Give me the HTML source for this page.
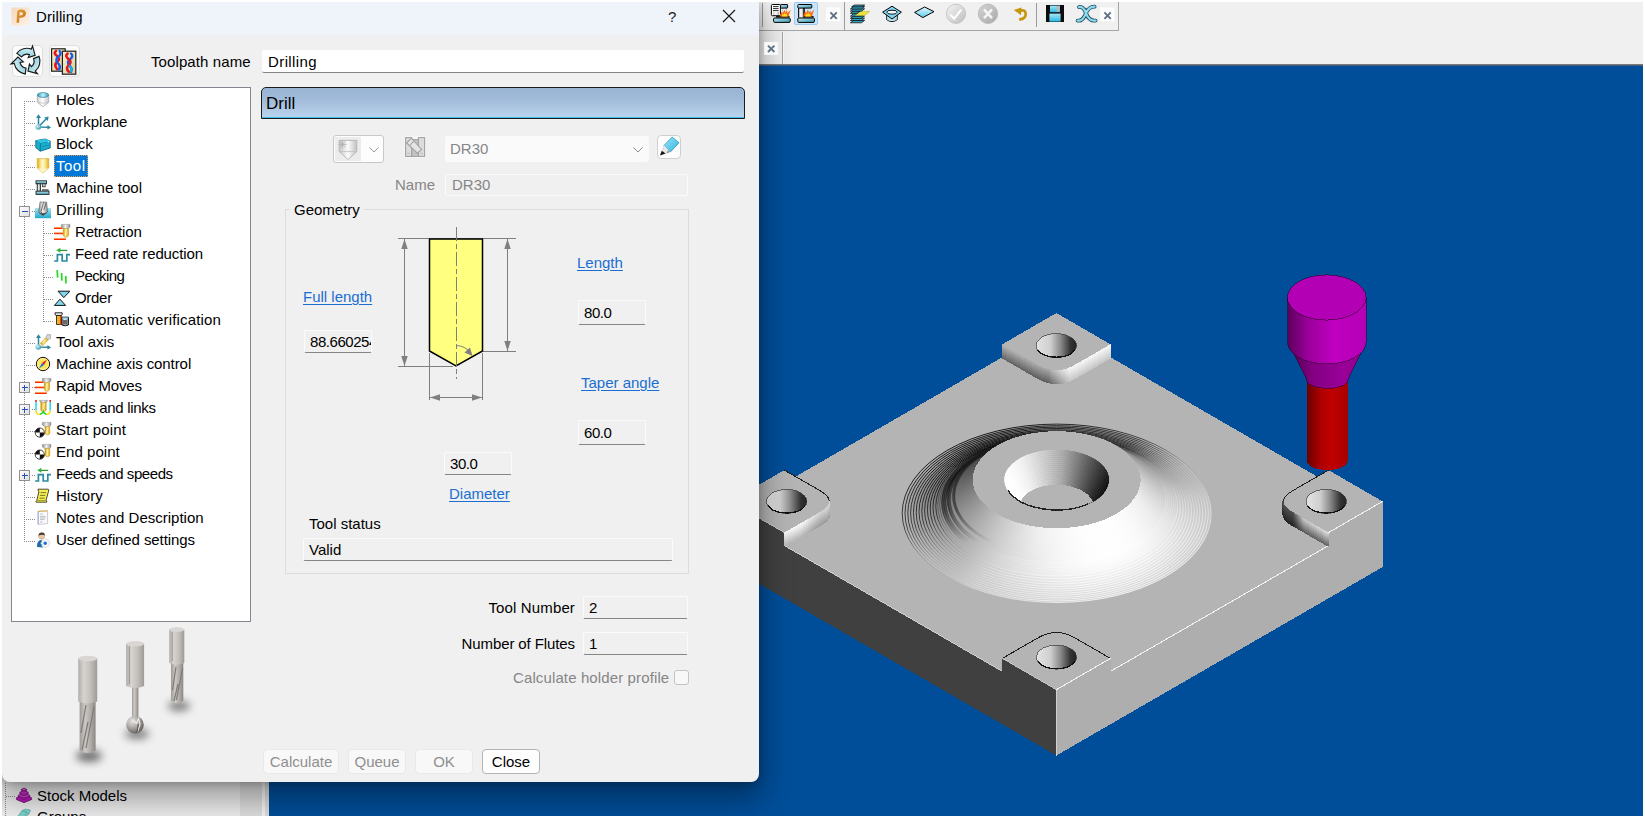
<!DOCTYPE html>
<html lang="en">
<head>
<meta charset="utf-8">
<title>Drilling</title>
<style>
html,body{margin:0;padding:0;}
body{width:1645px;height:818px;overflow:hidden;background:#fff;position:relative;font-family:"Liberation Sans",sans-serif;font-size:15px;color:#000;}
.abs{position:absolute;}
#app{position:absolute;left:2px;top:2px;width:1641px;height:814px;overflow:hidden;background:#004e99;}
#pg{position:absolute;left:-2px;top:-2px;width:1645px;height:818px;}
.t{position:absolute;white-space:nowrap;line-height:22px;height:22px;}
.r{text-align:right;}
.lnk{color:#1a6ed2;text-decoration:underline;text-underline-offset:2px;}
.dis{color:#868686;}
.fld{position:absolute;box-sizing:border-box;height:23px;line-height:21px;background:#f0f0f0;border:1px solid #fbfbfb;border-bottom:1px solid #868686;border-radius:2px;padding-left:5px;white-space:nowrap;overflow:hidden;letter-spacing:-0.45px;}
.btn{position:absolute;box-sizing:border-box;height:25px;line-height:24px;text-align:center;border-radius:4px;border:1px solid #e9e9e9;background:#f8f8f8;color:#8f8f8f;}
.ico{position:absolute;overflow:visible;}
.dot-h{position:absolute;height:1px;background-image:linear-gradient(90deg,#8a8a8a 50%,transparent 50%);background-size:2px 1px;}
.dot-v{position:absolute;width:1px;background-image:linear-gradient(180deg,#8a8a8a 50%,transparent 50%);background-size:1px 2px;}
.xbtn{position:absolute;width:14px;height:13px;background:#fdfdfd;}
</style>
</head>
<body>
<div id="app"><div id="pg">
<!-- ===== main window toolbars (right/top) ===== -->
<div class="abs" style="left:759px;top:2px;width:884px;height:62px;background:#f0f0f0;"></div>
<div class="abs" style="left:759px;top:30px;width:360px;height:1px;background:#a6a6a6;"></div>
<div class="abs" style="left:1118px;top:2px;width:1px;height:29px;background:#a6a6a6;"></div>
<div class="abs" style="left:762px;top:3px;width:1px;height:24px;background:#9a9a9a;"></div>
<div class="abs" style="left:844px;top:2px;width:1px;height:28px;background:#9a9a9a;"></div>
<div class="abs" style="left:1036px;top:3px;width:1px;height:24px;background:#9a9a9a;"></div>
<div class="abs" style="left:782px;top:32px;width:1px;height:32px;background:#a6a6a6;"></div>
<div class="abs" style="left:794px;top:2px;width:24px;height:23px;box-sizing:border-box;background:#cce4f7;border:1px solid #99c9ef;border-radius:2px;"></div>
<div class="abs" style="left:759px;top:64px;width:884px;height:1px;background:#7a7a7a;"></div>
<div class="abs" style="left:759px;top:65px;width:884px;height:1px;background:#4a5f7c;"></div>
<div class="abs" style="left:783px;top:32px;width:1px;height:32px;background:#fafafa;"></div>
<svg class="abs" style="left:0;top:0" width="1645" height="818" viewBox="0 0 1645 818" shape-rendering="crispEdges">
<defs>
<linearGradient id="hole" x1="0" y1="0" x2="1" y2="0"><stop offset="0" stop-color="#e4e4e4"/><stop offset="0.35" stop-color="#cfcfcf"/><stop offset="0.6" stop-color="#8a8a8a"/><stop offset="0.85" stop-color="#333"/><stop offset="1" stop-color="#222"/></linearGradient>
<linearGradient id="bw00_13" gradientUnits="userSpaceOnUse" x1="1002.3" y1="0" x2="1110.5" y2="0"><stop offset="0" stop-color="#666666"/><stop offset="0.42" stop-color="#5e5e5e"/><stop offset="0.62" stop-color="#c7c7c7"/><stop offset="1" stop-color="#c7c7c7"/></linearGradient>
<linearGradient id="bw00_12" gradientUnits="userSpaceOnUse" x1="1002.3" y1="0" x2="1110.5" y2="0"><stop offset="0" stop-color="#6c6c6c"/><stop offset="0.42" stop-color="#636363"/><stop offset="0.62" stop-color="#cacaca"/><stop offset="1" stop-color="#cacaca"/></linearGradient>
<linearGradient id="bw00_11" gradientUnits="userSpaceOnUse" x1="1002.3" y1="0" x2="1110.5" y2="0"><stop offset="0" stop-color="#727272"/><stop offset="0.42" stop-color="#696969"/><stop offset="0.62" stop-color="#cecece"/><stop offset="1" stop-color="#cecece"/></linearGradient>
<linearGradient id="bw00_10" gradientUnits="userSpaceOnUse" x1="1002.3" y1="0" x2="1110.5" y2="0"><stop offset="0" stop-color="#787878"/><stop offset="0.42" stop-color="#6e6e6e"/><stop offset="0.62" stop-color="#d1d1d1"/><stop offset="1" stop-color="#d1d1d1"/></linearGradient>
<linearGradient id="bw00_9" gradientUnits="userSpaceOnUse" x1="1002.3" y1="0" x2="1110.5" y2="0"><stop offset="0" stop-color="#7e7e7e"/><stop offset="0.42" stop-color="#737373"/><stop offset="0.62" stop-color="#d5d5d5"/><stop offset="1" stop-color="#d5d5d5"/></linearGradient>
<linearGradient id="bw00_8" gradientUnits="userSpaceOnUse" x1="1002.3" y1="0" x2="1110.5" y2="0"><stop offset="0" stop-color="#838383"/><stop offset="0.42" stop-color="#797979"/><stop offset="0.62" stop-color="#d9d9d9"/><stop offset="1" stop-color="#d9d9d9"/></linearGradient>
<linearGradient id="bw00_7" gradientUnits="userSpaceOnUse" x1="1002.3" y1="0" x2="1110.5" y2="0"><stop offset="0" stop-color="#898989"/><stop offset="0.42" stop-color="#7e7e7e"/><stop offset="0.62" stop-color="#dcdcdc"/><stop offset="1" stop-color="#dcdcdc"/></linearGradient>
<linearGradient id="bw00_6" gradientUnits="userSpaceOnUse" x1="1002.3" y1="0" x2="1110.5" y2="0"><stop offset="0" stop-color="#8f8f8f"/><stop offset="0.42" stop-color="#848484"/><stop offset="0.62" stop-color="#e0e0e0"/><stop offset="1" stop-color="#e0e0e0"/></linearGradient>
<linearGradient id="bw00_5" gradientUnits="userSpaceOnUse" x1="1002.3" y1="0" x2="1110.5" y2="0"><stop offset="0" stop-color="#959595"/><stop offset="0.42" stop-color="#898989"/><stop offset="0.62" stop-color="#e3e3e3"/><stop offset="1" stop-color="#e3e3e3"/></linearGradient>
<linearGradient id="bw00_4" gradientUnits="userSpaceOnUse" x1="1002.3" y1="0" x2="1110.5" y2="0"><stop offset="0" stop-color="#9b9b9b"/><stop offset="0.42" stop-color="#8f8f8f"/><stop offset="0.62" stop-color="#e7e7e7"/><stop offset="1" stop-color="#e7e7e7"/></linearGradient>
<linearGradient id="bw00_3" gradientUnits="userSpaceOnUse" x1="1002.3" y1="0" x2="1110.5" y2="0"><stop offset="0" stop-color="#a1a1a1"/><stop offset="0.42" stop-color="#949494"/><stop offset="0.62" stop-color="#eaeaea"/><stop offset="1" stop-color="#eaeaea"/></linearGradient>
<linearGradient id="bw00_2" gradientUnits="userSpaceOnUse" x1="1002.3" y1="0" x2="1110.5" y2="0"><stop offset="0" stop-color="#a7a7a7"/><stop offset="0.42" stop-color="#999999"/><stop offset="0.62" stop-color="#eeeeee"/><stop offset="1" stop-color="#eeeeee"/></linearGradient>
<linearGradient id="bw00_1" gradientUnits="userSpaceOnUse" x1="1002.3" y1="0" x2="1110.5" y2="0"><stop offset="0" stop-color="#adadad"/><stop offset="0.42" stop-color="#9f9f9f"/><stop offset="0.62" stop-color="#f1f1f1"/><stop offset="1" stop-color="#f1f1f1"/></linearGradient>
<linearGradient id="bw00_0" gradientUnits="userSpaceOnUse" x1="1002.3" y1="0" x2="1110.5" y2="0"><stop offset="0" stop-color="#b2b2b2"/><stop offset="0.42" stop-color="#a4a4a4"/><stop offset="0.62" stop-color="#f5f5f5"/><stop offset="1" stop-color="#f5f5f5"/></linearGradient>
<linearGradient id="bw08_13" gradientUnits="userSpaceOnUse" x1="784.3" y1="0" x2="820.1" y2="0"><stop offset="0" stop-color="#b8b8b8"/><stop offset="0.5" stop-color="#b8b8b8"/><stop offset="1" stop-color="#9c9c9c"/></linearGradient>
<linearGradient id="bw08_12" gradientUnits="userSpaceOnUse" x1="784.3" y1="0" x2="820.1" y2="0"><stop offset="0" stop-color="#bdbdbd"/><stop offset="0.5" stop-color="#bdbdbd"/><stop offset="1" stop-color="#a0a0a0"/></linearGradient>
<linearGradient id="bw08_11" gradientUnits="userSpaceOnUse" x1="784.3" y1="0" x2="820.1" y2="0"><stop offset="0" stop-color="#c1c1c1"/><stop offset="0.5" stop-color="#c1c1c1"/><stop offset="1" stop-color="#a4a4a4"/></linearGradient>
<linearGradient id="bw08_10" gradientUnits="userSpaceOnUse" x1="784.3" y1="0" x2="820.1" y2="0"><stop offset="0" stop-color="#c6c6c6"/><stop offset="0.5" stop-color="#c6c6c6"/><stop offset="1" stop-color="#a9a9a9"/></linearGradient>
<linearGradient id="bw08_9" gradientUnits="userSpaceOnUse" x1="784.3" y1="0" x2="820.1" y2="0"><stop offset="0" stop-color="#cbcbcb"/><stop offset="0.5" stop-color="#cbcbcb"/><stop offset="1" stop-color="#adadad"/></linearGradient>
<linearGradient id="bw08_8" gradientUnits="userSpaceOnUse" x1="784.3" y1="0" x2="820.1" y2="0"><stop offset="0" stop-color="#d0d0d0"/><stop offset="0.5" stop-color="#d0d0d0"/><stop offset="1" stop-color="#b1b1b1"/></linearGradient>
<linearGradient id="bw08_7" gradientUnits="userSpaceOnUse" x1="784.3" y1="0" x2="820.1" y2="0"><stop offset="0" stop-color="#d5d5d5"/><stop offset="0.5" stop-color="#d5d5d5"/><stop offset="1" stop-color="#b5b5b5"/></linearGradient>
<linearGradient id="bw08_6" gradientUnits="userSpaceOnUse" x1="784.3" y1="0" x2="820.1" y2="0"><stop offset="0" stop-color="#dadada"/><stop offset="0.5" stop-color="#dadada"/><stop offset="1" stop-color="#b9b9b9"/></linearGradient>
<linearGradient id="bw08_5" gradientUnits="userSpaceOnUse" x1="784.3" y1="0" x2="820.1" y2="0"><stop offset="0" stop-color="#dfdfdf"/><stop offset="0.5" stop-color="#dfdfdf"/><stop offset="1" stop-color="#bdbdbd"/></linearGradient>
<linearGradient id="bw08_4" gradientUnits="userSpaceOnUse" x1="784.3" y1="0" x2="820.1" y2="0"><stop offset="0" stop-color="#e4e4e4"/><stop offset="0.5" stop-color="#e4e4e4"/><stop offset="1" stop-color="#c2c2c2"/></linearGradient>
<linearGradient id="bw08_3" gradientUnits="userSpaceOnUse" x1="784.3" y1="0" x2="820.1" y2="0"><stop offset="0" stop-color="#e9e9e9"/><stop offset="0.5" stop-color="#e9e9e9"/><stop offset="1" stop-color="#c6c6c6"/></linearGradient>
<linearGradient id="bw08_2" gradientUnits="userSpaceOnUse" x1="784.3" y1="0" x2="820.1" y2="0"><stop offset="0" stop-color="#eeeeee"/><stop offset="0.5" stop-color="#eeeeee"/><stop offset="1" stop-color="#cacaca"/></linearGradient>
<linearGradient id="bw08_1" gradientUnits="userSpaceOnUse" x1="784.3" y1="0" x2="820.1" y2="0"><stop offset="0" stop-color="#f2f2f2"/><stop offset="0.5" stop-color="#f2f2f2"/><stop offset="1" stop-color="#cecece"/></linearGradient>
<linearGradient id="bw08_0" gradientUnits="userSpaceOnUse" x1="784.3" y1="0" x2="820.1" y2="0"><stop offset="0" stop-color="#f7f7f7"/><stop offset="0.5" stop-color="#f7f7f7"/><stop offset="1" stop-color="#d2d2d2"/></linearGradient>
<linearGradient id="bw80_13" gradientUnits="userSpaceOnUse" x1="1292.7" y1="0" x2="1328.5" y2="0"><stop offset="0" stop-color="#242424"/><stop offset="0.3" stop-color="#5c5c5c"/><stop offset="1" stop-color="#666666"/></linearGradient>
<linearGradient id="bw80_12" gradientUnits="userSpaceOnUse" x1="1292.7" y1="0" x2="1328.5" y2="0"><stop offset="0" stop-color="#272727"/><stop offset="0.3" stop-color="#646464"/><stop offset="1" stop-color="#6f6f6f"/></linearGradient>
<linearGradient id="bw80_11" gradientUnits="userSpaceOnUse" x1="1292.7" y1="0" x2="1328.5" y2="0"><stop offset="0" stop-color="#2a2a2a"/><stop offset="0.3" stop-color="#6c6c6c"/><stop offset="1" stop-color="#787878"/></linearGradient>
<linearGradient id="bw80_10" gradientUnits="userSpaceOnUse" x1="1292.7" y1="0" x2="1328.5" y2="0"><stop offset="0" stop-color="#2d2d2d"/><stop offset="0.3" stop-color="#747474"/><stop offset="1" stop-color="#818181"/></linearGradient>
<linearGradient id="bw80_9" gradientUnits="userSpaceOnUse" x1="1292.7" y1="0" x2="1328.5" y2="0"><stop offset="0" stop-color="#303030"/><stop offset="0.3" stop-color="#7c7c7c"/><stop offset="1" stop-color="#8a8a8a"/></linearGradient>
<linearGradient id="bw80_8" gradientUnits="userSpaceOnUse" x1="1292.7" y1="0" x2="1328.5" y2="0"><stop offset="0" stop-color="#333333"/><stop offset="0.3" stop-color="#848484"/><stop offset="1" stop-color="#939393"/></linearGradient>
<linearGradient id="bw80_7" gradientUnits="userSpaceOnUse" x1="1292.7" y1="0" x2="1328.5" y2="0"><stop offset="0" stop-color="#373737"/><stop offset="0.3" stop-color="#8d8d8d"/><stop offset="1" stop-color="#9c9c9c"/></linearGradient>
<linearGradient id="bw80_6" gradientUnits="userSpaceOnUse" x1="1292.7" y1="0" x2="1328.5" y2="0"><stop offset="0" stop-color="#3a3a3a"/><stop offset="0.3" stop-color="#959595"/><stop offset="1" stop-color="#a5a5a5"/></linearGradient>
<linearGradient id="bw80_5" gradientUnits="userSpaceOnUse" x1="1292.7" y1="0" x2="1328.5" y2="0"><stop offset="0" stop-color="#3d3d3d"/><stop offset="0.3" stop-color="#9d9d9d"/><stop offset="1" stop-color="#aeaeae"/></linearGradient>
<linearGradient id="bw80_4" gradientUnits="userSpaceOnUse" x1="1292.7" y1="0" x2="1328.5" y2="0"><stop offset="0" stop-color="#404040"/><stop offset="0.3" stop-color="#a5a5a5"/><stop offset="1" stop-color="#b7b7b7"/></linearGradient>
<linearGradient id="bw80_3" gradientUnits="userSpaceOnUse" x1="1292.7" y1="0" x2="1328.5" y2="0"><stop offset="0" stop-color="#434343"/><stop offset="0.3" stop-color="#adadad"/><stop offset="1" stop-color="#c0c0c0"/></linearGradient>
<linearGradient id="bw80_2" gradientUnits="userSpaceOnUse" x1="1292.7" y1="0" x2="1328.5" y2="0"><stop offset="0" stop-color="#464646"/><stop offset="0.3" stop-color="#b5b5b5"/><stop offset="1" stop-color="#c9c9c9"/></linearGradient>
<linearGradient id="bw80_1" gradientUnits="userSpaceOnUse" x1="1292.7" y1="0" x2="1328.5" y2="0"><stop offset="0" stop-color="#4a4a4a"/><stop offset="0.3" stop-color="#bdbdbd"/><stop offset="1" stop-color="#d2d2d2"/></linearGradient>
<linearGradient id="bw80_0" gradientUnits="userSpaceOnUse" x1="1292.7" y1="0" x2="1328.5" y2="0"><stop offset="0" stop-color="#4d4d4d"/><stop offset="0.3" stop-color="#c5c5c5"/><stop offset="1" stop-color="#dbdbdb"/></linearGradient>
<linearGradient id="c0" x1="0.258" y1="0.063" x2="0.742" y2="0.937"><stop offset="0.000" stop-color="#a8a8a8"/><stop offset="0.125" stop-color="#adadad"/><stop offset="0.250" stop-color="#b2b2b2"/><stop offset="0.375" stop-color="#b8b8b8"/><stop offset="0.500" stop-color="#bdbdbd"/><stop offset="0.625" stop-color="#c2c2c2"/><stop offset="0.750" stop-color="#c7c7c7"/><stop offset="0.875" stop-color="#cccccc"/><stop offset="1.000" stop-color="#d1d1d1"/></linearGradient>
<linearGradient id="c1" x1="0.258" y1="0.063" x2="0.742" y2="0.937"><stop offset="0.000" stop-color="#a2a2a2"/><stop offset="0.125" stop-color="#a9a9a9"/><stop offset="0.250" stop-color="#afafaf"/><stop offset="0.375" stop-color="#b5b5b5"/><stop offset="0.500" stop-color="#bbbbbb"/><stop offset="0.625" stop-color="#c1c1c1"/><stop offset="0.750" stop-color="#c8c8c8"/><stop offset="0.875" stop-color="#cecece"/><stop offset="1.000" stop-color="#d4d4d4"/></linearGradient>
<linearGradient id="c2" x1="0.258" y1="0.063" x2="0.742" y2="0.937"><stop offset="0.000" stop-color="#9c9c9c"/><stop offset="0.125" stop-color="#a3a3a3"/><stop offset="0.250" stop-color="#ababab"/><stop offset="0.375" stop-color="#b2b2b2"/><stop offset="0.500" stop-color="#bababa"/><stop offset="0.625" stop-color="#c1c1c1"/><stop offset="0.750" stop-color="#c9c9c9"/><stop offset="0.875" stop-color="#d0d0d0"/><stop offset="1.000" stop-color="#d7d7d7"/></linearGradient>
<linearGradient id="c3" x1="0.258" y1="0.063" x2="0.742" y2="0.937"><stop offset="0.000" stop-color="#959595"/><stop offset="0.125" stop-color="#9e9e9e"/><stop offset="0.250" stop-color="#a6a6a6"/><stop offset="0.375" stop-color="#afafaf"/><stop offset="0.500" stop-color="#b8b8b8"/><stop offset="0.625" stop-color="#c1c1c1"/><stop offset="0.750" stop-color="#c9c9c9"/><stop offset="0.875" stop-color="#d2d2d2"/><stop offset="1.000" stop-color="#dbdbdb"/></linearGradient>
<linearGradient id="c4" x1="0.258" y1="0.063" x2="0.742" y2="0.937"><stop offset="0.000" stop-color="#8e8e8e"/><stop offset="0.125" stop-color="#989898"/><stop offset="0.250" stop-color="#a2a2a2"/><stop offset="0.375" stop-color="#acacac"/><stop offset="0.500" stop-color="#b6b6b6"/><stop offset="0.625" stop-color="#c0c0c0"/><stop offset="0.750" stop-color="#cacaca"/><stop offset="0.875" stop-color="#d4d4d4"/><stop offset="1.000" stop-color="#dfdfdf"/></linearGradient>
<linearGradient id="c5" x1="0.258" y1="0.063" x2="0.742" y2="0.937"><stop offset="0.000" stop-color="#878787"/><stop offset="0.125" stop-color="#929292"/><stop offset="0.250" stop-color="#9e9e9e"/><stop offset="0.375" stop-color="#a9a9a9"/><stop offset="0.500" stop-color="#b5b5b5"/><stop offset="0.625" stop-color="#c0c0c0"/><stop offset="0.750" stop-color="#cbcbcb"/><stop offset="0.875" stop-color="#d7d7d7"/><stop offset="1.000" stop-color="#e2e2e2"/></linearGradient>
<linearGradient id="c6" x1="0.258" y1="0.063" x2="0.742" y2="0.937"><stop offset="0.000" stop-color="#808080"/><stop offset="0.125" stop-color="#8d8d8d"/><stop offset="0.250" stop-color="#9a9a9a"/><stop offset="0.375" stop-color="#a6a6a6"/><stop offset="0.500" stop-color="#b3b3b3"/><stop offset="0.625" stop-color="#c0c0c0"/><stop offset="0.750" stop-color="#cccccc"/><stop offset="0.875" stop-color="#d9d9d9"/><stop offset="1.000" stop-color="#e5e5e5"/></linearGradient>
<linearGradient id="c7" x1="0.258" y1="0.063" x2="0.742" y2="0.937"><stop offset="0.000" stop-color="#7a7a7a"/><stop offset="0.125" stop-color="#888888"/><stop offset="0.250" stop-color="#959595"/><stop offset="0.375" stop-color="#a3a3a3"/><stop offset="0.500" stop-color="#b1b1b1"/><stop offset="0.625" stop-color="#bfbfbf"/><stop offset="0.750" stop-color="#cdcdcd"/><stop offset="0.875" stop-color="#dbdbdb"/><stop offset="1.000" stop-color="#e9e9e9"/></linearGradient>
<linearGradient id="c8" x1="0.258" y1="0.063" x2="0.742" y2="0.937"><stop offset="0.000" stop-color="#737373"/><stop offset="0.125" stop-color="#828282"/><stop offset="0.250" stop-color="#929292"/><stop offset="0.375" stop-color="#a1a1a1"/><stop offset="0.500" stop-color="#b0b0b0"/><stop offset="0.625" stop-color="#bfbfbf"/><stop offset="0.750" stop-color="#cecece"/><stop offset="0.875" stop-color="#dddddd"/><stop offset="1.000" stop-color="#ececec"/></linearGradient>
<linearGradient id="c9" x1="0.258" y1="0.063" x2="0.742" y2="0.937"><stop offset="0.000" stop-color="#6d6d6d"/><stop offset="0.125" stop-color="#7e7e7e"/><stop offset="0.250" stop-color="#8e8e8e"/><stop offset="0.375" stop-color="#9e9e9e"/><stop offset="0.500" stop-color="#aeaeae"/><stop offset="0.625" stop-color="#bebebe"/><stop offset="0.750" stop-color="#cfcfcf"/><stop offset="0.875" stop-color="#dfdfdf"/><stop offset="1.000" stop-color="#efefef"/></linearGradient>
<linearGradient id="c10" x1="0.258" y1="0.063" x2="0.742" y2="0.937"><stop offset="0.000" stop-color="#686868"/><stop offset="0.125" stop-color="#797979"/><stop offset="0.250" stop-color="#8a8a8a"/><stop offset="0.375" stop-color="#9c9c9c"/><stop offset="0.500" stop-color="#adadad"/><stop offset="0.625" stop-color="#bebebe"/><stop offset="0.750" stop-color="#cfcfcf"/><stop offset="0.875" stop-color="#e1e1e1"/><stop offset="1.000" stop-color="#f2f2f2"/></linearGradient>
<linearGradient id="c11" x1="0.258" y1="0.063" x2="0.742" y2="0.937"><stop offset="0.000" stop-color="#626262"/><stop offset="0.125" stop-color="#757575"/><stop offset="0.250" stop-color="#878787"/><stop offset="0.375" stop-color="#999999"/><stop offset="0.500" stop-color="#acacac"/><stop offset="0.625" stop-color="#bebebe"/><stop offset="0.750" stop-color="#d0d0d0"/><stop offset="0.875" stop-color="#e2e2e2"/><stop offset="1.000" stop-color="#f5f5f5"/></linearGradient>
<linearGradient id="c12" x1="0.258" y1="0.063" x2="0.742" y2="0.937"><stop offset="0.000" stop-color="#5e5e5e"/><stop offset="0.125" stop-color="#717171"/><stop offset="0.250" stop-color="#848484"/><stop offset="0.375" stop-color="#979797"/><stop offset="0.500" stop-color="#aaaaaa"/><stop offset="0.625" stop-color="#bebebe"/><stop offset="0.750" stop-color="#d1d1d1"/><stop offset="0.875" stop-color="#e4e4e4"/><stop offset="1.000" stop-color="#f7f7f7"/></linearGradient>
<linearGradient id="c13" x1="0.258" y1="0.063" x2="0.742" y2="0.937"><stop offset="0.000" stop-color="#5c5c5c"/><stop offset="0.125" stop-color="#6f6f6f"/><stop offset="0.250" stop-color="#838383"/><stop offset="0.375" stop-color="#969696"/><stop offset="0.500" stop-color="#aaaaaa"/><stop offset="0.625" stop-color="#bdbdbd"/><stop offset="0.750" stop-color="#d1d1d1"/><stop offset="0.875" stop-color="#e5e5e5"/><stop offset="1.000" stop-color="#f8f8f8"/></linearGradient>
<linearGradient id="c14" x1="0.258" y1="0.063" x2="0.742" y2="0.937"><stop offset="0.000" stop-color="#5a5a5a"/><stop offset="0.125" stop-color="#6e6e6e"/><stop offset="0.250" stop-color="#828282"/><stop offset="0.375" stop-color="#969696"/><stop offset="0.500" stop-color="#aaaaaa"/><stop offset="0.625" stop-color="#bdbdbd"/><stop offset="0.750" stop-color="#d1d1d1"/><stop offset="0.875" stop-color="#e5e5e5"/><stop offset="1.000" stop-color="#f9f9f9"/></linearGradient>
<linearGradient id="c15" x1="0.258" y1="0.063" x2="0.742" y2="0.937"><stop offset="0.000" stop-color="#595959"/><stop offset="0.125" stop-color="#6d6d6d"/><stop offset="0.250" stop-color="#818181"/><stop offset="0.375" stop-color="#959595"/><stop offset="0.500" stop-color="#a9a9a9"/><stop offset="0.625" stop-color="#bdbdbd"/><stop offset="0.750" stop-color="#d1d1d1"/><stop offset="0.875" stop-color="#e6e6e6"/><stop offset="1.000" stop-color="#fafafa"/></linearGradient>
<linearGradient id="c16" x1="0.258" y1="0.063" x2="0.742" y2="0.937"><stop offset="0.000" stop-color="#575757"/><stop offset="0.125" stop-color="#6c6c6c"/><stop offset="0.250" stop-color="#808080"/><stop offset="0.375" stop-color="#949494"/><stop offset="0.500" stop-color="#a9a9a9"/><stop offset="0.625" stop-color="#bdbdbd"/><stop offset="0.750" stop-color="#d2d2d2"/><stop offset="0.875" stop-color="#e6e6e6"/><stop offset="1.000" stop-color="#fafafa"/></linearGradient>
<linearGradient id="c17" x1="0.258" y1="0.063" x2="0.742" y2="0.937"><stop offset="0.000" stop-color="#565656"/><stop offset="0.125" stop-color="#6a6a6a"/><stop offset="0.250" stop-color="#7f7f7f"/><stop offset="0.375" stop-color="#949494"/><stop offset="0.500" stop-color="#a8a8a8"/><stop offset="0.625" stop-color="#bdbdbd"/><stop offset="0.750" stop-color="#d2d2d2"/><stop offset="0.875" stop-color="#e7e7e7"/><stop offset="1.000" stop-color="#fbfbfb"/></linearGradient>
<linearGradient id="c18" x1="0.258" y1="0.063" x2="0.742" y2="0.937"><stop offset="0.000" stop-color="#545454"/><stop offset="0.125" stop-color="#696969"/><stop offset="0.250" stop-color="#7e7e7e"/><stop offset="0.375" stop-color="#939393"/><stop offset="0.500" stop-color="#a8a8a8"/><stop offset="0.625" stop-color="#bdbdbd"/><stop offset="0.750" stop-color="#d2d2d2"/><stop offset="0.875" stop-color="#e7e7e7"/><stop offset="1.000" stop-color="#fcfcfc"/></linearGradient>
<linearGradient id="c19" x1="0.258" y1="0.063" x2="0.742" y2="0.937"><stop offset="0.000" stop-color="#535353"/><stop offset="0.125" stop-color="#686868"/><stop offset="0.250" stop-color="#7d7d7d"/><stop offset="0.375" stop-color="#929292"/><stop offset="0.500" stop-color="#a8a8a8"/><stop offset="0.625" stop-color="#bdbdbd"/><stop offset="0.750" stop-color="#d2d2d2"/><stop offset="0.875" stop-color="#e7e7e7"/><stop offset="1.000" stop-color="#fdfdfd"/></linearGradient>
<linearGradient id="c20" x1="0.258" y1="0.063" x2="0.742" y2="0.937"><stop offset="0.000" stop-color="#515151"/><stop offset="0.125" stop-color="#676767"/><stop offset="0.250" stop-color="#7c7c7c"/><stop offset="0.375" stop-color="#929292"/><stop offset="0.500" stop-color="#a7a7a7"/><stop offset="0.625" stop-color="#bdbdbd"/><stop offset="0.750" stop-color="#d2d2d2"/><stop offset="0.875" stop-color="#e8e8e8"/><stop offset="1.000" stop-color="#fdfdfd"/></linearGradient>
<linearGradient id="c21" x1="0.258" y1="0.063" x2="0.742" y2="0.937"><stop offset="0.000" stop-color="#505050"/><stop offset="0.125" stop-color="#666666"/><stop offset="0.250" stop-color="#7c7c7c"/><stop offset="0.375" stop-color="#919191"/><stop offset="0.500" stop-color="#a7a7a7"/><stop offset="0.625" stop-color="#bdbdbd"/><stop offset="0.750" stop-color="#d3d3d3"/><stop offset="0.875" stop-color="#e8e8e8"/><stop offset="1.000" stop-color="#fefefe"/></linearGradient>
<linearGradient id="c22" x1="0.258" y1="0.063" x2="0.742" y2="0.937"><stop offset="0.000" stop-color="#4f4f4f"/><stop offset="0.125" stop-color="#656565"/><stop offset="0.250" stop-color="#7b7b7b"/><stop offset="0.375" stop-color="#919191"/><stop offset="0.500" stop-color="#a7a7a7"/><stop offset="0.625" stop-color="#bdbdbd"/><stop offset="0.750" stop-color="#d3d3d3"/><stop offset="0.875" stop-color="#e9e9e9"/><stop offset="1.000" stop-color="#ffffff"/></linearGradient>
<linearGradient id="c23" x1="0.258" y1="0.063" x2="0.742" y2="0.937"><stop offset="0.000" stop-color="#4d4d4d"/><stop offset="0.125" stop-color="#646464"/><stop offset="0.250" stop-color="#7a7a7a"/><stop offset="0.375" stop-color="#909090"/><stop offset="0.500" stop-color="#a6a6a6"/><stop offset="0.625" stop-color="#bdbdbd"/><stop offset="0.750" stop-color="#d3d3d3"/><stop offset="0.875" stop-color="#e9e9e9"/><stop offset="1.000" stop-color="#ffffff"/></linearGradient>
<linearGradient id="c24" x1="0.258" y1="0.063" x2="0.742" y2="0.937"><stop offset="0.000" stop-color="#4c4c4c"/><stop offset="0.125" stop-color="#636363"/><stop offset="0.250" stop-color="#797979"/><stop offset="0.375" stop-color="#909090"/><stop offset="0.500" stop-color="#a6a6a6"/><stop offset="0.625" stop-color="#bdbdbd"/><stop offset="0.750" stop-color="#d3d3d3"/><stop offset="0.875" stop-color="#eaeaea"/><stop offset="1.000" stop-color="#ffffff"/></linearGradient>
<linearGradient id="c25" x1="0.258" y1="0.063" x2="0.742" y2="0.937"><stop offset="0.000" stop-color="#4b4b4b"/><stop offset="0.125" stop-color="#626262"/><stop offset="0.250" stop-color="#787878"/><stop offset="0.375" stop-color="#8f8f8f"/><stop offset="0.500" stop-color="#a6a6a6"/><stop offset="0.625" stop-color="#bdbdbd"/><stop offset="0.750" stop-color="#d3d3d3"/><stop offset="0.875" stop-color="#eaeaea"/><stop offset="1.000" stop-color="#ffffff"/></linearGradient>
<linearGradient id="c26" x1="0.258" y1="0.063" x2="0.742" y2="0.937"><stop offset="0.000" stop-color="#4a4a4a"/><stop offset="0.125" stop-color="#616161"/><stop offset="0.250" stop-color="#787878"/><stop offset="0.375" stop-color="#8f8f8f"/><stop offset="0.500" stop-color="#a6a6a6"/><stop offset="0.625" stop-color="#bcbcbc"/><stop offset="0.750" stop-color="#d3d3d3"/><stop offset="0.875" stop-color="#eaeaea"/><stop offset="1.000" stop-color="#ffffff"/></linearGradient>
<linearGradient id="c27" x1="0.258" y1="0.063" x2="0.742" y2="0.937"><stop offset="0.000" stop-color="#494949"/><stop offset="0.125" stop-color="#606060"/><stop offset="0.250" stop-color="#777777"/><stop offset="0.375" stop-color="#8e8e8e"/><stop offset="0.500" stop-color="#a5a5a5"/><stop offset="0.625" stop-color="#bcbcbc"/><stop offset="0.750" stop-color="#d4d4d4"/><stop offset="0.875" stop-color="#ebebeb"/><stop offset="1.000" stop-color="#ffffff"/></linearGradient>
<linearGradient id="c28" x1="0.258" y1="0.063" x2="0.742" y2="0.937"><stop offset="0.000" stop-color="#484848"/><stop offset="0.125" stop-color="#5f5f5f"/><stop offset="0.250" stop-color="#767676"/><stop offset="0.375" stop-color="#8e8e8e"/><stop offset="0.500" stop-color="#a5a5a5"/><stop offset="0.625" stop-color="#bcbcbc"/><stop offset="0.750" stop-color="#d4d4d4"/><stop offset="0.875" stop-color="#ebebeb"/><stop offset="1.000" stop-color="#ffffff"/></linearGradient>
<linearGradient id="c29" x1="0.258" y1="0.063" x2="0.742" y2="0.937"><stop offset="0.000" stop-color="#474747"/><stop offset="0.125" stop-color="#5e5e5e"/><stop offset="0.250" stop-color="#767676"/><stop offset="0.375" stop-color="#8d8d8d"/><stop offset="0.500" stop-color="#a5a5a5"/><stop offset="0.625" stop-color="#bcbcbc"/><stop offset="0.750" stop-color="#d4d4d4"/><stop offset="0.875" stop-color="#ebebeb"/><stop offset="1.000" stop-color="#ffffff"/></linearGradient>
<linearGradient id="c30" x1="0.258" y1="0.063" x2="0.742" y2="0.937"><stop offset="0.000" stop-color="#464646"/><stop offset="0.125" stop-color="#5d5d5d"/><stop offset="0.250" stop-color="#757575"/><stop offset="0.375" stop-color="#8d8d8d"/><stop offset="0.500" stop-color="#a5a5a5"/><stop offset="0.625" stop-color="#bcbcbc"/><stop offset="0.750" stop-color="#d4d4d4"/><stop offset="0.875" stop-color="#ececec"/><stop offset="1.000" stop-color="#ffffff"/></linearGradient>
<linearGradient id="c31" x1="0.258" y1="0.063" x2="0.742" y2="0.937"><stop offset="0.000" stop-color="#454545"/><stop offset="0.125" stop-color="#5d5d5d"/><stop offset="0.250" stop-color="#757575"/><stop offset="0.375" stop-color="#8c8c8c"/><stop offset="0.500" stop-color="#a4a4a4"/><stop offset="0.625" stop-color="#bcbcbc"/><stop offset="0.750" stop-color="#d4d4d4"/><stop offset="0.875" stop-color="#ececec"/><stop offset="1.000" stop-color="#ffffff"/></linearGradient>
<linearGradient id="c32" x1="0.258" y1="0.063" x2="0.742" y2="0.937"><stop offset="0.000" stop-color="#444444"/><stop offset="0.125" stop-color="#5c5c5c"/><stop offset="0.250" stop-color="#747474"/><stop offset="0.375" stop-color="#8c8c8c"/><stop offset="0.500" stop-color="#a4a4a4"/><stop offset="0.625" stop-color="#bcbcbc"/><stop offset="0.750" stop-color="#d4d4d4"/><stop offset="0.875" stop-color="#ececec"/><stop offset="1.000" stop-color="#ffffff"/></linearGradient>
<linearGradient id="c33" x1="0.258" y1="0.063" x2="0.742" y2="0.937"><stop offset="0.000" stop-color="#434343"/><stop offset="0.125" stop-color="#5b5b5b"/><stop offset="0.250" stop-color="#737373"/><stop offset="0.375" stop-color="#8c8c8c"/><stop offset="0.500" stop-color="#a4a4a4"/><stop offset="0.625" stop-color="#bcbcbc"/><stop offset="0.750" stop-color="#d4d4d4"/><stop offset="0.875" stop-color="#ededed"/><stop offset="1.000" stop-color="#ffffff"/></linearGradient>
<linearGradient id="c34" x1="0.258" y1="0.063" x2="0.742" y2="0.937"><stop offset="0.000" stop-color="#424242"/><stop offset="0.125" stop-color="#5a5a5a"/><stop offset="0.250" stop-color="#737373"/><stop offset="0.375" stop-color="#8b8b8b"/><stop offset="0.500" stop-color="#a4a4a4"/><stop offset="0.625" stop-color="#bcbcbc"/><stop offset="0.750" stop-color="#d4d4d4"/><stop offset="0.875" stop-color="#ededed"/><stop offset="1.000" stop-color="#ffffff"/></linearGradient>
<linearGradient id="c35" x1="0.258" y1="0.063" x2="0.742" y2="0.937"><stop offset="0.000" stop-color="#414141"/><stop offset="0.125" stop-color="#5a5a5a"/><stop offset="0.250" stop-color="#727272"/><stop offset="0.375" stop-color="#8b8b8b"/><stop offset="0.500" stop-color="#a3a3a3"/><stop offset="0.625" stop-color="#bcbcbc"/><stop offset="0.750" stop-color="#d5d5d5"/><stop offset="0.875" stop-color="#ededed"/><stop offset="1.000" stop-color="#ffffff"/></linearGradient>
<linearGradient id="c36" x1="0.258" y1="0.063" x2="0.742" y2="0.937"><stop offset="0.000" stop-color="#404040"/><stop offset="0.125" stop-color="#595959"/><stop offset="0.250" stop-color="#727272"/><stop offset="0.375" stop-color="#8b8b8b"/><stop offset="0.500" stop-color="#a3a3a3"/><stop offset="0.625" stop-color="#bcbcbc"/><stop offset="0.750" stop-color="#d5d5d5"/><stop offset="0.875" stop-color="#ededed"/><stop offset="1.000" stop-color="#ffffff"/></linearGradient>
<linearGradient id="c37" x1="0.258" y1="0.063" x2="0.742" y2="0.937"><stop offset="0.000" stop-color="#404040"/><stop offset="0.125" stop-color="#585858"/><stop offset="0.250" stop-color="#717171"/><stop offset="0.375" stop-color="#8a8a8a"/><stop offset="0.500" stop-color="#a3a3a3"/><stop offset="0.625" stop-color="#bcbcbc"/><stop offset="0.750" stop-color="#d5d5d5"/><stop offset="0.875" stop-color="#eeeeee"/><stop offset="1.000" stop-color="#ffffff"/></linearGradient>
<linearGradient id="c38" x1="0.258" y1="0.063" x2="0.742" y2="0.937"><stop offset="0.000" stop-color="#3f3f3f"/><stop offset="0.125" stop-color="#585858"/><stop offset="0.250" stop-color="#717171"/><stop offset="0.375" stop-color="#8a8a8a"/><stop offset="0.500" stop-color="#a3a3a3"/><stop offset="0.625" stop-color="#bcbcbc"/><stop offset="0.750" stop-color="#d5d5d5"/><stop offset="0.875" stop-color="#eeeeee"/><stop offset="1.000" stop-color="#ffffff"/></linearGradient>
<linearGradient id="c39" x1="0.258" y1="0.063" x2="0.742" y2="0.937"><stop offset="0.000" stop-color="#3e3e3e"/><stop offset="0.125" stop-color="#575757"/><stop offset="0.250" stop-color="#707070"/><stop offset="0.375" stop-color="#8a8a8a"/><stop offset="0.500" stop-color="#a3a3a3"/><stop offset="0.625" stop-color="#bcbcbc"/><stop offset="0.750" stop-color="#d5d5d5"/><stop offset="0.875" stop-color="#eeeeee"/><stop offset="1.000" stop-color="#ffffff"/></linearGradient>
<linearGradient id="c40" x1="0.258" y1="0.063" x2="0.742" y2="0.937"><stop offset="0.000" stop-color="#3d3d3d"/><stop offset="0.125" stop-color="#575757"/><stop offset="0.250" stop-color="#707070"/><stop offset="0.375" stop-color="#898989"/><stop offset="0.500" stop-color="#a2a2a2"/><stop offset="0.625" stop-color="#bcbcbc"/><stop offset="0.750" stop-color="#d5d5d5"/><stop offset="0.875" stop-color="#eeeeee"/><stop offset="1.000" stop-color="#ffffff"/></linearGradient>
<linearGradient id="c41" x1="0.258" y1="0.063" x2="0.742" y2="0.937"><stop offset="0.000" stop-color="#3d3d3d"/><stop offset="0.125" stop-color="#565656"/><stop offset="0.250" stop-color="#6f6f6f"/><stop offset="0.375" stop-color="#898989"/><stop offset="0.500" stop-color="#a2a2a2"/><stop offset="0.625" stop-color="#bcbcbc"/><stop offset="0.750" stop-color="#d5d5d5"/><stop offset="0.875" stop-color="#efefef"/><stop offset="1.000" stop-color="#ffffff"/></linearGradient>
<linearGradient id="c42" x1="0.258" y1="0.063" x2="0.742" y2="0.937"><stop offset="0.000" stop-color="#3c3c3c"/><stop offset="0.125" stop-color="#565656"/><stop offset="0.250" stop-color="#6f6f6f"/><stop offset="0.375" stop-color="#898989"/><stop offset="0.500" stop-color="#a2a2a2"/><stop offset="0.625" stop-color="#bcbcbc"/><stop offset="0.750" stop-color="#d5d5d5"/><stop offset="0.875" stop-color="#efefef"/><stop offset="1.000" stop-color="#ffffff"/></linearGradient>
<linearGradient id="c43" x1="0.258" y1="0.063" x2="0.742" y2="0.937"><stop offset="0.000" stop-color="#3b3b3b"/><stop offset="0.125" stop-color="#555555"/><stop offset="0.250" stop-color="#6f6f6f"/><stop offset="0.375" stop-color="#888888"/><stop offset="0.500" stop-color="#a2a2a2"/><stop offset="0.625" stop-color="#bcbcbc"/><stop offset="0.750" stop-color="#d5d5d5"/><stop offset="0.875" stop-color="#efefef"/><stop offset="1.000" stop-color="#ffffff"/></linearGradient>
<linearGradient id="c44" x1="0.258" y1="0.063" x2="0.742" y2="0.937"><stop offset="0.000" stop-color="#3b3b3b"/><stop offset="0.125" stop-color="#545454"/><stop offset="0.250" stop-color="#6e6e6e"/><stop offset="0.375" stop-color="#888888"/><stop offset="0.500" stop-color="#a2a2a2"/><stop offset="0.625" stop-color="#bcbcbc"/><stop offset="0.750" stop-color="#d5d5d5"/><stop offset="0.875" stop-color="#efefef"/><stop offset="1.000" stop-color="#ffffff"/></linearGradient>
<linearGradient id="c45" x1="0.258" y1="0.063" x2="0.742" y2="0.937"><stop offset="0.000" stop-color="#3a3a3a"/><stop offset="0.125" stop-color="#545454"/><stop offset="0.250" stop-color="#6e6e6e"/><stop offset="0.375" stop-color="#888888"/><stop offset="0.500" stop-color="#a2a2a2"/><stop offset="0.625" stop-color="#bcbcbc"/><stop offset="0.750" stop-color="#d5d5d5"/><stop offset="0.875" stop-color="#efefef"/><stop offset="1.000" stop-color="#ffffff"/></linearGradient>
<linearGradient id="c46" x1="0.258" y1="0.063" x2="0.742" y2="0.937"><stop offset="0.000" stop-color="#393939"/><stop offset="0.125" stop-color="#535353"/><stop offset="0.250" stop-color="#6d6d6d"/><stop offset="0.375" stop-color="#878787"/><stop offset="0.500" stop-color="#a2a2a2"/><stop offset="0.625" stop-color="#bcbcbc"/><stop offset="0.750" stop-color="#d6d6d6"/><stop offset="0.875" stop-color="#f0f0f0"/><stop offset="1.000" stop-color="#ffffff"/></linearGradient>
<linearGradient id="c47" x1="0.258" y1="0.063" x2="0.742" y2="0.937"><stop offset="0.000" stop-color="#393939"/><stop offset="0.125" stop-color="#535353"/><stop offset="0.250" stop-color="#6d6d6d"/><stop offset="0.375" stop-color="#878787"/><stop offset="0.500" stop-color="#a1a1a1"/><stop offset="0.625" stop-color="#bbbbbb"/><stop offset="0.750" stop-color="#d6d6d6"/><stop offset="0.875" stop-color="#f0f0f0"/><stop offset="1.000" stop-color="#ffffff"/></linearGradient>
<linearGradient id="c48" x1="0.258" y1="0.063" x2="0.742" y2="0.937"><stop offset="0.000" stop-color="#383838"/><stop offset="0.125" stop-color="#535353"/><stop offset="0.250" stop-color="#6d6d6d"/><stop offset="0.375" stop-color="#878787"/><stop offset="0.500" stop-color="#a1a1a1"/><stop offset="0.625" stop-color="#bbbbbb"/><stop offset="0.750" stop-color="#d6d6d6"/><stop offset="0.875" stop-color="#f0f0f0"/><stop offset="1.000" stop-color="#ffffff"/></linearGradient>
<linearGradient id="c49" x1="0.258" y1="0.063" x2="0.742" y2="0.937"><stop offset="0.000" stop-color="#383838"/><stop offset="0.125" stop-color="#525252"/><stop offset="0.250" stop-color="#6c6c6c"/><stop offset="0.375" stop-color="#878787"/><stop offset="0.500" stop-color="#a1a1a1"/><stop offset="0.625" stop-color="#bbbbbb"/><stop offset="0.750" stop-color="#d6d6d6"/><stop offset="0.875" stop-color="#f0f0f0"/><stop offset="1.000" stop-color="#ffffff"/></linearGradient>
<linearGradient id="c50" x1="0.258" y1="0.063" x2="0.742" y2="0.937"><stop offset="0.000" stop-color="#383838"/><stop offset="0.125" stop-color="#525252"/><stop offset="0.250" stop-color="#6c6c6c"/><stop offset="0.375" stop-color="#878787"/><stop offset="0.500" stop-color="#a1a1a1"/><stop offset="0.625" stop-color="#bbbbbb"/><stop offset="0.750" stop-color="#d6d6d6"/><stop offset="0.875" stop-color="#f0f0f0"/><stop offset="1.000" stop-color="#ffffff"/></linearGradient>
<linearGradient id="ring" x1="0.228" y1="0.081" x2="0.772" y2="0.919"><stop offset="0" stop-color="#000" stop-opacity="0.85"/><stop offset="0.3" stop-color="#111" stop-opacity="0.7"/><stop offset="0.5" stop-color="#444" stop-opacity="0.2"/><stop offset="0.7" stop-color="#fff" stop-opacity="0.3"/><stop offset="1" stop-color="#fff" stop-opacity="0.75"/></linearGradient>
<linearGradient id="acc" gradientUnits="userSpaceOnUse" x1="0" y1="556" x2="0" y2="440"><stop offset="0" stop-color="#000" stop-opacity="0"/><stop offset="0.12" stop-color="#000" stop-opacity="0"/><stop offset="0.4" stop-color="#000" stop-opacity="0.45"/><stop offset="0.65" stop-color="#000" stop-opacity="0.5"/><stop offset="1" stop-color="#000" stop-opacity="0.1"/></linearGradient>
<linearGradient id="hg" x1="0.004" y1="0.439" x2="0.996" y2="0.561"><stop offset="0.000" stop-color="#ffffff"/><stop offset="0.125" stop-color="#f2f2f2"/><stop offset="0.250" stop-color="#dbdbdb"/><stop offset="0.375" stop-color="#c4c4c4"/><stop offset="0.500" stop-color="#adadad"/><stop offset="0.625" stop-color="#8a8a8a"/><stop offset="0.750" stop-color="#666666"/><stop offset="0.875" stop-color="#424242"/><stop offset="1.000" stop-color="#1f1f1f"/></linearGradient>
<linearGradient id="ring2" x1="0.004" y1="0.439" x2="0.996" y2="0.561"><stop offset="0" stop-color="#fff" stop-opacity="0.7"/><stop offset="0.5" stop-color="#888" stop-opacity="0.3"/><stop offset="1" stop-color="#000" stop-opacity="0.5"/></linearGradient>

<linearGradient id="red" x1="0" y1="0" x2="1" y2="0"><stop offset="0" stop-color="#6a0000"/><stop offset="0.35" stop-color="#b00000"/><stop offset="0.6" stop-color="#c00000"/><stop offset="1" stop-color="#a80000"/></linearGradient>
<linearGradient id="mag" x1="0" y1="0" x2="1" y2="0"><stop offset="0" stop-color="#5a005a"/><stop offset="0.25" stop-color="#980098"/><stop offset="0.6" stop-color="#c000c0"/><stop offset="1" stop-color="#b400b4"/></linearGradient>
<linearGradient id="mag2" x1="0" y1="0" x2="1" y2="0"><stop offset="0" stop-color="#4a004a"/><stop offset="0.3" stop-color="#800080"/><stop offset="0.7" stop-color="#9a009a"/><stop offset="1" stop-color="#8c008c"/></linearGradient>

</defs>
<polygon points="730.2,514.4 1056.4,702.7 1056.4,755.5 730.2,567.1" fill="#404040" />
<polygon points="1056.4,702.7 1382.6,514.4 1382.6,567.1 1056.4,755.5" fill="#aeaeae" />
<polygon points="1056.4,326.0 1382.6,514.4 1056.4,702.7 730.2,514.4" fill="#b4b4b4" />
<line x1="1328.5" y1="545.6" x2="1110.5" y2="671.4" stroke="#f4f4f4" stroke-width="1" />
<line x1="784.3" y1="545.6" x2="1002.3" y2="671.4" stroke="#e0e0e0" stroke-width="0.8" />
<polygon points="1110.5,658.4 1056.4,689.7 1056.4,704.7 1110.5,673.4" fill="#aeaeae" />
<polygon points="1382.6,501.4 1328.5,532.6 1328.5,547.6 1382.6,516.4" fill="#aeaeae" />
<polygon points="730.2,501.4 784.3,532.6 784.3,547.6 730.2,516.4" fill="#404040" />
<polygon points="1002.3,658.4 1056.4,689.7 1056.4,704.7 1002.3,673.4" fill="#404040" />
<path d="M1110.5,357.3 L1074.8,377.9 Q1056.4,388.5 1038.0,377.9 L1002.3,357.3" fill="none" stroke="url(#bw00_13)" stroke-width="2.2"/>
<path d="M1110.5,356.3 L1074.8,376.9 Q1056.4,387.5 1038.0,376.9 L1002.3,356.3" fill="none" stroke="url(#bw00_12)" stroke-width="2.2"/>
<path d="M1110.5,355.3 L1074.8,375.9 Q1056.4,386.5 1038.0,375.9 L1002.3,355.3" fill="none" stroke="url(#bw00_11)" stroke-width="2.2"/>
<path d="M1110.5,354.3 L1074.8,374.9 Q1056.4,385.5 1038.0,374.9 L1002.3,354.3" fill="none" stroke="url(#bw00_10)" stroke-width="2.2"/>
<path d="M1110.5,353.3 L1074.8,373.9 Q1056.4,384.5 1038.0,373.9 L1002.3,353.3" fill="none" stroke="url(#bw00_9)" stroke-width="2.2"/>
<path d="M1110.5,352.3 L1074.8,372.9 Q1056.4,383.5 1038.0,372.9 L1002.3,352.3" fill="none" stroke="url(#bw00_8)" stroke-width="2.2"/>
<path d="M1110.5,351.3 L1074.8,371.9 Q1056.4,382.5 1038.0,371.9 L1002.3,351.3" fill="none" stroke="url(#bw00_7)" stroke-width="2.2"/>
<path d="M1110.5,350.3 L1074.8,370.9 Q1056.4,381.5 1038.0,370.9 L1002.3,350.3" fill="none" stroke="url(#bw00_6)" stroke-width="2.2"/>
<path d="M1110.5,349.3 L1074.8,369.9 Q1056.4,380.5 1038.0,369.9 L1002.3,349.3" fill="none" stroke="url(#bw00_5)" stroke-width="2.2"/>
<path d="M1110.5,348.3 L1074.8,368.9 Q1056.4,379.5 1038.0,368.9 L1002.3,348.3" fill="none" stroke="url(#bw00_4)" stroke-width="2.2"/>
<path d="M1110.5,347.3 L1074.8,367.9 Q1056.4,378.5 1038.0,367.9 L1002.3,347.3" fill="none" stroke="url(#bw00_3)" stroke-width="2.2"/>
<path d="M1110.5,346.3 L1074.8,366.9 Q1056.4,377.5 1038.0,366.9 L1002.3,346.3" fill="none" stroke="url(#bw00_2)" stroke-width="2.2"/>
<path d="M1110.5,345.3 L1074.8,365.9 Q1056.4,376.5 1038.0,365.9 L1002.3,345.3" fill="none" stroke="url(#bw00_1)" stroke-width="2.2"/>
<path d="M1110.5,344.3 L1074.8,364.9 Q1056.4,375.5 1038.0,364.9 L1002.3,344.3" fill="none" stroke="url(#bw00_0)" stroke-width="2.2"/>
<path d="M1056.4,313.0 L1110.5,344.3 L1074.8,364.9 Q1056.4,375.5 1038.0,364.9 L1002.3,344.3 Z" fill="#b4b4b4"/>
<ellipse cx="1056.4" cy="345.6" rx="20.2" ry="12" fill="url(#hole)" stroke="#3a3a3a" stroke-width="0.7"/>
<path d="M1037.9 350.0 A20.2 12 0 0 0 1074.9 350.0" fill="none" stroke="#111" stroke-width="1.3"/>
<path d="M784.3,545.6 L820.1,525.0 Q829.3,519.7 829.3,514.4" fill="none" stroke="url(#bw08_13)" stroke-width="2.2"/>
<path d="M784.3,544.6 L820.1,524.0 Q829.3,518.7 829.3,513.4" fill="none" stroke="url(#bw08_12)" stroke-width="2.2"/>
<path d="M784.3,543.6 L820.1,523.0 Q829.3,517.7 829.3,512.4" fill="none" stroke="url(#bw08_11)" stroke-width="2.2"/>
<path d="M784.3,542.6 L820.1,522.0 Q829.3,516.7 829.3,511.4" fill="none" stroke="url(#bw08_10)" stroke-width="2.2"/>
<path d="M784.3,541.6 L820.1,521.0 Q829.3,515.7 829.3,510.4" fill="none" stroke="url(#bw08_9)" stroke-width="2.2"/>
<path d="M784.3,540.6 L820.1,520.0 Q829.3,514.7 829.3,509.4" fill="none" stroke="url(#bw08_8)" stroke-width="2.2"/>
<path d="M784.3,539.6 L820.1,519.0 Q829.3,513.7 829.3,508.4" fill="none" stroke="url(#bw08_7)" stroke-width="2.2"/>
<path d="M784.3,538.6 L820.1,518.0 Q829.3,512.7 829.3,507.4" fill="none" stroke="url(#bw08_6)" stroke-width="2.2"/>
<path d="M784.3,537.6 L820.1,517.0 Q829.3,511.7 829.3,506.4" fill="none" stroke="url(#bw08_5)" stroke-width="2.2"/>
<path d="M784.3,536.6 L820.1,516.0 Q829.3,510.7 829.3,505.4" fill="none" stroke="url(#bw08_4)" stroke-width="2.2"/>
<path d="M784.3,535.6 L820.1,515.0 Q829.3,509.7 829.3,504.4" fill="none" stroke="url(#bw08_3)" stroke-width="2.2"/>
<path d="M784.3,534.6 L820.1,514.0 Q829.3,508.7 829.3,503.4" fill="none" stroke="url(#bw08_2)" stroke-width="2.2"/>
<path d="M784.3,533.6 L820.1,513.0 Q829.3,507.7 829.3,502.4" fill="none" stroke="url(#bw08_1)" stroke-width="2.2"/>
<path d="M784.3,532.6 L820.1,512.0 Q829.3,506.7 829.3,501.4" fill="none" stroke="url(#bw08_0)" stroke-width="2.2"/>
<path d="M730.2,501.4 L784.3,532.6 L820.1,512.0 Q838.5,501.4 820.1,490.7 L784.3,470.1 Z" fill="#b4b4b4"/>
<path d="M829.3,501.4 Q829.3,496.0 820.1,490.7 L784.3,470.1" fill="none" stroke="#1c1c1c" stroke-width="1"/>
<ellipse cx="786.6" cy="501.4" rx="20.2" ry="12" fill="url(#hole)" stroke="#3a3a3a" stroke-width="0.7"/>
<path d="M768.1 505.8 A20.2 12 0 0 0 805.1 505.8" fill="none" stroke="#111" stroke-width="1.3"/>
<path d="M1283.5,514.3 Q1283.5,519.7 1292.7,525.0 L1328.5,545.6" fill="none" stroke="url(#bw80_13)" stroke-width="2.2"/>
<path d="M1283.5,513.3 Q1283.5,518.7 1292.7,524.0 L1328.5,544.6" fill="none" stroke="url(#bw80_12)" stroke-width="2.2"/>
<path d="M1283.5,512.3 Q1283.5,517.7 1292.7,523.0 L1328.5,543.6" fill="none" stroke="url(#bw80_11)" stroke-width="2.2"/>
<path d="M1283.5,511.3 Q1283.5,516.7 1292.7,522.0 L1328.5,542.6" fill="none" stroke="url(#bw80_10)" stroke-width="2.2"/>
<path d="M1283.5,510.3 Q1283.5,515.7 1292.7,521.0 L1328.5,541.6" fill="none" stroke="url(#bw80_9)" stroke-width="2.2"/>
<path d="M1283.5,509.3 Q1283.5,514.7 1292.7,520.0 L1328.5,540.6" fill="none" stroke="url(#bw80_8)" stroke-width="2.2"/>
<path d="M1283.5,508.3 Q1283.5,513.7 1292.7,519.0 L1328.5,539.6" fill="none" stroke="url(#bw80_7)" stroke-width="2.2"/>
<path d="M1283.5,507.3 Q1283.5,512.7 1292.7,518.0 L1328.5,538.6" fill="none" stroke="url(#bw80_6)" stroke-width="2.2"/>
<path d="M1283.5,506.3 Q1283.5,511.7 1292.7,517.0 L1328.5,537.6" fill="none" stroke="url(#bw80_5)" stroke-width="2.2"/>
<path d="M1283.5,505.3 Q1283.5,510.7 1292.7,516.0 L1328.5,536.6" fill="none" stroke="url(#bw80_4)" stroke-width="2.2"/>
<path d="M1283.5,504.3 Q1283.5,509.7 1292.7,515.0 L1328.5,535.6" fill="none" stroke="url(#bw80_3)" stroke-width="2.2"/>
<path d="M1283.5,503.3 Q1283.5,508.7 1292.7,514.0 L1328.5,534.6" fill="none" stroke="url(#bw80_2)" stroke-width="2.2"/>
<path d="M1283.5,502.3 Q1283.5,507.7 1292.7,513.0 L1328.5,533.6" fill="none" stroke="url(#bw80_1)" stroke-width="2.2"/>
<path d="M1283.5,501.3 Q1283.5,506.7 1292.7,512.0 L1328.5,532.6" fill="none" stroke="url(#bw80_0)" stroke-width="2.2"/>
<path d="M1382.6,501.4 L1328.5,470.1 L1292.7,490.7 Q1274.3,501.3 1292.7,512.0 L1328.5,532.6 Z" fill="#b4b4b4"/>
<path d="M1328.5,470.1 L1292.7,490.7 Q1283.5,496.0 1283.5,501.3" fill="none" stroke="#1c1c1c" stroke-width="1"/>
<ellipse cx="1326.2" cy="501.4" rx="20.2" ry="12" fill="url(#hole)" stroke="#3a3a3a" stroke-width="0.7"/>
<path d="M1307.7 505.8 A20.2 12 0 0 0 1344.7 505.8" fill="none" stroke="#111" stroke-width="1.3"/>
<path d="M1056.4,689.7 L1002.3,658.4 L1038.0,637.8 Q1056.4,627.2 1074.8,637.8 L1110.5,658.4 Z" fill="#b4b4b4"/>
<path d="M1002.3,658.4 L1038.0,637.8 Q1056.4,627.2 1074.8,637.8 L1110.5,658.4" fill="none" stroke="#1c1c1c" stroke-width="1"/>
<ellipse cx="1056.4" cy="657.1" rx="20.2" ry="12" fill="url(#hole)" stroke="#3a3a3a" stroke-width="0.7"/>
<path d="M1037.9 661.5 A20.2 12 0 0 0 1074.9 661.5" fill="none" stroke="#111" stroke-width="1.3"/>
<line x1="1382.6" y1="501.4" x2="1328.5" y2="532.6" stroke="#f4f4f4" stroke-width="1" />
<line x1="1110.5" y1="658.4" x2="1056.4" y2="689.7" stroke="#f4f4f4" stroke-width="1" />
<line x1="1056.4" y1="689.7" x2="1056.4" y2="755.5" stroke="#d0d0d0" stroke-width="1" />
<line x1="1002.3" y1="658.4" x2="1056.4" y2="689.7" stroke="#d4d4d4" stroke-width="0.8" />
<line x1="730.2" y1="501.4" x2="784.3" y2="532.6" stroke="#d4d4d4" stroke-width="0.8" />
<g shape-rendering="geometricPrecision"><ellipse cx="1056.7" cy="513.3" rx="154.5" ry="89.2" fill="url(#c0)" stroke="url(#ring)" stroke-width="1"/>
<ellipse cx="1056.7" cy="513.3" rx="151.7" ry="87.6" fill="url(#c1)" stroke="url(#ring)" stroke-width="1"/>
<ellipse cx="1056.7" cy="513.1" rx="148.9" ry="86.0" fill="url(#c2)" stroke="url(#ring)" stroke-width="1"/>
<ellipse cx="1056.7" cy="512.9" rx="146.1" ry="84.4" fill="url(#c3)" stroke="url(#ring)" stroke-width="1"/>
<ellipse cx="1056.7" cy="512.6" rx="143.3" ry="82.7" fill="url(#c4)" stroke="url(#ring)" stroke-width="1"/>
<ellipse cx="1056.7" cy="512.2" rx="140.5" ry="81.1" fill="url(#c5)" stroke="url(#ring)" stroke-width="1"/>
<ellipse cx="1056.7" cy="511.6" rx="137.7" ry="79.5" fill="url(#c6)" stroke="url(#ring)" stroke-width="1"/>
<ellipse cx="1056.7" cy="511.0" rx="134.9" ry="77.9" fill="url(#c7)" stroke="url(#ring)" stroke-width="1"/>
<ellipse cx="1056.7" cy="510.3" rx="132.1" ry="76.3" fill="url(#c8)" stroke="url(#ring)" stroke-width="1"/>
<ellipse cx="1056.7" cy="509.4" rx="129.3" ry="74.7" fill="url(#c9)" stroke="url(#ring)" stroke-width="1"/>
<ellipse cx="1056.7" cy="508.5" rx="126.5" ry="73.0" fill="url(#c10)" stroke="url(#ring)" stroke-width="1"/>
<ellipse cx="1056.7" cy="507.4" rx="123.7" ry="71.4" fill="url(#c11)" stroke="url(#ring)" stroke-width="1"/>
<ellipse cx="1056.7" cy="506.2" rx="120.9" ry="69.8" fill="url(#c12)" stroke="url(#ring)" stroke-width="1"/>
<ellipse cx="1056.7" cy="505.8" rx="119.9" ry="69.2" fill="url(#c13)"/>
<ellipse cx="1056.7" cy="505.3" rx="118.9" ry="68.7" fill="url(#c14)" stroke="url(#ring)" stroke-width="0.5"/>
<ellipse cx="1056.7" cy="504.8" rx="117.9" ry="68.1" fill="url(#c15)"/>
<ellipse cx="1056.7" cy="504.3" rx="116.9" ry="67.5" fill="url(#c16)" stroke="url(#ring)" stroke-width="0.5"/>
<ellipse cx="1056.7" cy="503.8" rx="115.9" ry="66.9" fill="url(#c17)"/>
<ellipse cx="1056.7" cy="503.3" rx="114.9" ry="66.3" fill="url(#c18)" stroke="url(#ring)" stroke-width="0.5"/>
<ellipse cx="1056.7" cy="502.8" rx="113.9" ry="65.8" fill="url(#c19)"/>
<ellipse cx="1056.7" cy="502.2" rx="112.9" ry="65.2" fill="url(#c20)" stroke="url(#ring)" stroke-width="0.5"/>
<ellipse cx="1056.7" cy="501.6" rx="111.9" ry="64.6" fill="url(#c21)"/>
<ellipse cx="1056.7" cy="501.1" rx="110.9" ry="64.0" fill="url(#c22)" stroke="url(#ring)" stroke-width="0.5"/>
<ellipse cx="1056.7" cy="500.5" rx="109.9" ry="63.5" fill="url(#c23)"/>
<ellipse cx="1056.7" cy="499.8" rx="108.9" ry="62.9" fill="url(#c24)" stroke="url(#ring)" stroke-width="0.5"/>
<ellipse cx="1056.7" cy="499.2" rx="107.9" ry="62.3" fill="url(#c25)"/>
<ellipse cx="1056.7" cy="498.6" rx="106.9" ry="61.7" fill="url(#c26)"/>
<ellipse cx="1056.7" cy="497.9" rx="105.9" ry="61.1" fill="url(#c27)"/>
<ellipse cx="1056.7" cy="497.2" rx="104.9" ry="60.6" fill="url(#c28)"/>
<ellipse cx="1056.7" cy="496.6" rx="103.9" ry="60.0" fill="url(#c29)"/>
<ellipse cx="1056.7" cy="495.9" rx="102.9" ry="59.4" fill="url(#c30)"/>
<ellipse cx="1056.7" cy="495.1" rx="101.9" ry="58.8" fill="url(#c31)"/>
<ellipse cx="1056.7" cy="494.4" rx="100.9" ry="58.3" fill="url(#c32)"/>
<ellipse cx="1056.7" cy="493.7" rx="99.9" ry="57.7" fill="url(#c33)"/>
<ellipse cx="1056.7" cy="492.9" rx="98.9" ry="57.1" fill="url(#c34)"/>
<ellipse cx="1056.7" cy="492.1" rx="97.9" ry="56.5" fill="url(#c35)"/>
<ellipse cx="1056.7" cy="491.3" rx="96.9" ry="56.0" fill="url(#c36)"/>
<ellipse cx="1056.7" cy="490.5" rx="95.9" ry="55.4" fill="url(#c37)"/>
<ellipse cx="1056.7" cy="489.7" rx="94.9" ry="54.8" fill="url(#c38)"/>
<ellipse cx="1056.7" cy="488.8" rx="93.9" ry="54.2" fill="url(#c39)"/>
<ellipse cx="1056.7" cy="488.0" rx="92.9" ry="53.6" fill="url(#c40)"/>
<ellipse cx="1056.7" cy="487.1" rx="91.9" ry="53.1" fill="url(#c41)"/>
<ellipse cx="1056.7" cy="486.2" rx="90.9" ry="52.5" fill="url(#c42)"/>
<ellipse cx="1056.7" cy="485.3" rx="89.9" ry="51.9" fill="url(#c43)"/>
<ellipse cx="1056.7" cy="484.4" rx="88.9" ry="51.3" fill="url(#c44)"/>
<ellipse cx="1056.7" cy="483.5" rx="87.9" ry="50.8" fill="url(#c45)"/>
<ellipse cx="1056.7" cy="482.5" rx="86.9" ry="50.2" fill="url(#c46)"/>
<ellipse cx="1056.7" cy="481.6" rx="85.9" ry="49.6" fill="url(#c47)"/>
<ellipse cx="1056.7" cy="480.6" rx="84.9" ry="49.0" fill="url(#c48)"/>
<ellipse cx="1056.7" cy="479.6" rx="83.9" ry="48.4" fill="url(#c49)"/>
<ellipse cx="1056.7" cy="479.7" rx="84.0" ry="48.5" fill="url(#c50)"/></g>
<path d="M991.9 555.7 L984.7 552.5 L978.0 549.1 L971.7 545.3 L966.1 541.2 L961.0 536.9 L956.5 532.4 L952.6 527.7 L949.4 522.8 L946.9 517.8 L945.1 512.7 L944.1 507.5 L943.7 502.3 L944.1 497.0 L945.1 491.9 L946.9 486.8 L949.4 481.7 L952.6 476.9 L956.5 472.1 L961.0 467.6 L966.1 463.3 L971.7 459.2 L978.0 455.5 L984.7 452.0 L991.9 448.8" fill="none" stroke="url(#acc)" stroke-width="5" shape-rendering="geometricPrecision"/>
<path d="M994.8 550.4 L987.9 547.3 L981.5 544.0 L975.5 540.4 L970.1 536.5 L965.2 532.4 L960.9 528.1 L957.2 523.6 L954.2 518.9 L951.8 514.1 L950.1 509.2 L949.0 504.3 L948.7 499.3 L949.0 494.3 L950.1 489.3 L951.8 484.5 L954.2 479.7 L957.2 475.0 L960.9 470.5 L965.2 466.2 L970.1 462.0 L975.5 458.2 L981.5 454.5 L987.9 451.2 L994.8 448.2" fill="none" stroke="url(#acc)" stroke-width="4" shape-rendering="geometricPrecision"/>
<path d="M997.6 544.6 L991.1 541.8 L984.9 538.6 L979.3 535.1 L974.1 531.4 L969.4 527.5 L965.3 523.4 L961.8 519.1 L958.9 514.6 L956.7 510.1 L955.0 505.4 L954.0 500.7 L953.7 495.9 L954.0 491.2 L955.0 486.5 L956.7 481.8 L958.9 477.2 L961.8 472.8 L965.3 468.5 L969.4 464.3 L974.1 460.4 L979.3 456.7 L984.9 453.3 L991.1 450.1 L997.6 447.2" fill="none" stroke="url(#acc)" stroke-width="3" shape-rendering="geometricPrecision"/>
<ellipse cx="1056.7" cy="479.7" rx="84.0" ry="48.5" fill="#b4b4b4"/>
<clipPath id="hclip"><ellipse cx="1056.7" cy="479.7" rx="52.5" ry="30.3"/></clipPath>
<g clip-path="url(#hclip)">
<ellipse cx="1056.7" cy="479.7" rx="52.5" ry="30.3" fill="url(#hg)" stroke="url(#ring2)" stroke-width="0.5"/>
<ellipse cx="1056.7" cy="481.2" rx="51.6" ry="29.8" fill="url(#hg)" stroke="url(#ring2)" stroke-width="0.5"/>
<ellipse cx="1056.7" cy="482.6" rx="50.8" ry="29.3" fill="url(#hg)" stroke="url(#ring2)" stroke-width="0.5"/>
<ellipse cx="1056.7" cy="484.1" rx="49.9" ry="28.8" fill="url(#hg)" stroke="url(#ring2)" stroke-width="0.5"/>
<ellipse cx="1056.7" cy="485.6" rx="49.1" ry="28.3" fill="url(#hg)" stroke="url(#ring2)" stroke-width="0.5"/>
<ellipse cx="1056.7" cy="487.1" rx="48.2" ry="27.8" fill="url(#hg)" stroke="url(#ring2)" stroke-width="0.5"/>
<ellipse cx="1056.7" cy="488.5" rx="47.3" ry="27.3" fill="url(#hg)" stroke="url(#ring2)" stroke-width="0.5"/>
<ellipse cx="1056.7" cy="490.0" rx="46.5" ry="26.8" fill="url(#hg)" stroke="url(#ring2)" stroke-width="0.5"/>
<ellipse cx="1056.7" cy="491.5" rx="45.6" ry="26.3" fill="url(#hg)" stroke="url(#ring2)" stroke-width="0.5"/>
<ellipse cx="1056.7" cy="492.9" rx="44.8" ry="25.8" fill="url(#hg)" stroke="url(#ring2)" stroke-width="0.5"/>
<ellipse cx="1056.7" cy="494.4" rx="43.9" ry="25.3" fill="url(#hg)" stroke="url(#ring2)" stroke-width="0.5"/>
<ellipse cx="1056.7" cy="495.9" rx="43.0" ry="24.8" fill="url(#hg)" stroke="url(#ring2)" stroke-width="0.5"/>
<ellipse cx="1056.7" cy="497.4" rx="42.2" ry="24.3" fill="url(#hg)" stroke="url(#ring2)" stroke-width="0.5"/>
<ellipse cx="1056.7" cy="498.8" rx="41.3" ry="23.8" fill="url(#hg)" stroke="url(#ring2)" stroke-width="0.5"/>
<ellipse cx="1056.7" cy="500.3" rx="40.4" ry="23.4" fill="url(#hg)" stroke="url(#ring2)" stroke-width="0.5"/>
<ellipse cx="1056.7" cy="501.8" rx="39.6" ry="22.9" fill="url(#hg)" stroke="url(#ring2)" stroke-width="0.5"/>
<ellipse cx="1056.7" cy="503.3" rx="38.7" ry="22.4" fill="url(#hg)" stroke="url(#ring2)" stroke-width="0.5"/>
<ellipse cx="1056.7" cy="504.7" rx="37.9" ry="21.9" fill="url(#hg)" stroke="url(#ring2)" stroke-width="0.5"/>
<ellipse cx="1056.7" cy="506.2" rx="37.0" ry="21.4" fill="url(#hg)" stroke="url(#ring2)" stroke-width="0.5"/>
<ellipse cx="1056.7" cy="506.2" rx="37.0" ry="21.4" fill="#b4b4b4"/>
</g>
<path d="M1007.9 490.6 A52.5 30.3 0 0 0 1088.2 504.0" fill="none" stroke="#222" stroke-width="1.4"/>
<path d="M1307 380 L1307 461 A20.3 9 0 0 0 1347.6 461 L1347.6 380 Z" fill="url(#red)"/>
<path d="M1288 342 L1307 380.5 A20.3 8 0 0 0 1347.6 380.5 L1366 342 Z" fill="url(#mag2)" stroke="#300030" stroke-width="0.6"/>
<path d="M1287.5 297.5 L1287.5 342 A39.3 22 0 0 0 1366.1 342 L1366.1 297.5 Z" fill="url(#mag)" stroke="#300030" stroke-width="0.6"/>
<ellipse cx="1326.8" cy="297.5" rx="39.3" ry="22.6" fill="#b400b4" stroke="#300030" stroke-width="0.6"/>
</svg>
<!-- ===== bottom-left explorer strip ===== -->
<div class="abs" style="left:2px;top:770px;width:238px;height:46px;background:#ededed;"></div>
<div class="abs" style="left:240px;top:770px;width:29px;height:46px;background:#dedede;"></div>
<div class="abs" style="left:262px;top:770px;width:3px;height:46px;background:#f4f4f4;"></div>
<div class="dot-v" style="left:5px;top:783px;height:33px;"></div>
<div class="dot-h" style="left:6px;top:796px;width:10px;"></div>
<svg class="ico" style="left:16px;top:787px" width="16" height="16" viewBox="0 0 16 16">
<g stroke="#5a0a5a" stroke-width=".5">
<path d="M0.4 12.4 L8 9.4 L15.6 12.4 L8 15.6 Z" fill="#d62ad6"/><path d="M0.4 10.6 L8 7.6 L15.6 10.6 V12.4 L8 15.6 L0.4 12.4 Z" fill="#b81ab8"/>
<path d="M2.2 8.4 L8 6 L13.8 8.4 V10 L8 12.6 L2.2 10 Z" fill="#c422c4"/><path d="M2.2 8.4 L8 6 L13.8 8.4 L8 11 Z" fill="#e040e0"/>
<path d="M3.8 5.4 L8 3.6 L12.2 5.4 V7 L8 9 L3.8 7 Z" fill="#c422c4"/><path d="M3.8 5.4 L8 3.6 L12.2 5.4 L8 7.4 Z" fill="#e040e0"/>
<path d="M5.4 2.4 L8 1.2 L10.6 2.4 V4 L8 5.4 L5.4 4 Z" fill="#c422c4"/><path d="M5.4 2.4 L8 1.2 L10.6 2.4 L8 3.8 Z" fill="#ec60ec"/>
</g></svg>
<svg class="ico" style="left:16px;top:808px" width="18" height="10" viewBox="0 0 18 10">
<path d="M2 8 L6 2.6 L9.4 1.2 L14.4 2 L13 6 L9 9.6 Z" fill="#7fd0c8" stroke="#4aa8a0" stroke-width=".6"/><path d="M6 2.6 L10 4 L13 6 M10 4 L9 9.6" stroke="#4aa8a0" stroke-width=".6" fill="none"/>
</svg>
<div class="t" style="left:37px;top:785px;">Stock Models</div>
<div class="t" style="left:37px;top:806px;">Groups</div>
<!-- ===== dialog ===== -->
<div class="abs" id="dlg" style="left:2px;top:2px;width:757px;height:780px;background:#f0f0f0;border-radius:0 0 8px 8px;box-shadow:0 14px 30px 4px rgba(0,0,0,.34),0 1px 8px rgba(0,0,0,.25);"></div>
<div class="abs" id="titlebar" style="left:2px;top:2px;width:757px;height:33px;background:#eff3fa;"></div>
<div class="t" style="left:36px;top:6px;letter-spacing:.1px;">Drilling</div>
<div class="t" style="left:668px;top:6px;font-size:15px;color:#222;">?</div>
<svg class="ico" style="left:722px;top:9px" width="14" height="14" viewBox="0 0 14 14"><path d="M1 1 L13 13 M13 1 L1 13" stroke="#1a1a1a" stroke-width="1.2" fill="none"/></svg>

<!-- top buttons -->
<div class="abs" style="left:12px;top:45px;width:31px;height:32px;box-sizing:border-box;background:#fbfbfb;border:1px solid #dedede;border-radius:4px;"></div>
<div class="abs" style="left:49px;top:45px;width:31px;height:32px;box-sizing:border-box;background:#fbfbfb;border:1px solid #dedede;border-radius:4px;"></div>

<div class="t" style="left:151px;top:51px;letter-spacing:.1px;">Toolpath name</div>
<div class="abs" style="left:262px;top:50px;width:482px;height:23px;box-sizing:border-box;background:#fff;border-bottom:1px solid #868686;border-radius:2px;"></div>
<div class="t" style="left:268px;top:51px;letter-spacing:.4px;">Drilling</div>

<!-- tree box -->
<div class="abs" style="left:11px;top:87px;width:240px;height:535px;box-sizing:border-box;background:#fff;border:1px solid #828790;"></div>

<!-- page header -->
<div class="abs" style="left:261px;top:87px;width:484px;height:32px;box-sizing:border-box;border:1px solid #1c1c1c;border-radius:5px 5px 0 0;background:linear-gradient(#98b3d3,#a3bddb 45%,#b9d2ec 95%);"></div>
<div class="abs" style="left:262px;top:116.5px;width:482px;height:1.5px;background:#3bbcea;"></div>
<div class="t" style="left:266px;top:93px;font-size:17px;">Drill</div>

<!-- tool selection row -->
<div class="abs" style="left:333px;top:135px;width:51px;height:28px;box-sizing:border-box;background:#fdfdfd;border:1px solid #c8c8c8;border-radius:3px;"></div>
<div class="abs" style="left:335px;top:137px;width:26px;height:24px;background:#ececec;"></div>
<svg class="ico" style="left:367.5px;top:146px" width="12" height="8" viewBox="0 0 12 8"><path d="M1.5 1.5 L6 6 L10.5 1.5" stroke="#9a9a9a" stroke-width="1" fill="none"/></svg>
<div class="abs" style="left:445px;top:136px;width:203.5px;height:26px;background:#fafafa;border-radius:2px;"></div>
<div class="t dis" style="left:450px;top:138px;">DR30</div>
<svg class="ico" style="left:632px;top:146px" width="12" height="8" viewBox="0 0 12 8"><path d="M1.5 1.5 L6 6 L10.5 1.5" stroke="#8a8a8a" stroke-width="1" fill="none"/></svg>
<div class="abs" style="left:657px;top:135px;width:24px;height:24px;box-sizing:border-box;background:#fdfdfd;border:1px solid #cfcfcf;border-radius:4px;"></div>

<div class="t dis" style="left:395px;top:174px;">Name</div>
<div class="abs" style="left:445px;top:174px;width:243px;height:22px;box-sizing:border-box;background:#f0f0f0;border:1px solid #fbfbfb;border-radius:2px;"></div>
<div class="t dis" style="left:452px;top:174px;">DR30</div>

<!-- Geometry group -->
<div class="abs" style="left:285px;top:209px;width:404px;height:365px;box-sizing:border-box;border:1px solid #dcdcdc;"></div>
<div class="t" style="left:290px;top:199px;background:#f0f0f0;padding:0 4px;">Geometry</div>

<div class="t lnk" style="left:303px;top:286px;">Full length</div>
<div class="fld" style="left:304px;top:330px;width:68px;height:23px;line-height:21px;padding-left:5px;"><span style="display:block;width:61px;overflow:hidden;">88.660254</span></div>
<div class="t lnk" style="left:577px;top:252px;">Length</div>
<div class="fld" style="left:578px;top:300px;width:68px;height:25px;line-height:23px;">80.0</div>
<div class="t lnk" style="left:581px;top:372px;">Taper angle</div>
<div class="fld" style="left:578px;top:420px;width:68px;height:25px;line-height:23px;">60.0</div>
<div class="fld" style="left:444px;top:452px;width:68px;height:23px;line-height:21px;">30.0</div>
<div class="t lnk" style="left:449px;top:483px;">Diameter</div>
<div class="t" style="left:309px;top:513px;">Tool status</div>
<div class="fld" style="left:303px;top:538px;width:370px;height:23px;line-height:21px;letter-spacing:0;">Valid</div>

<div class="t r" style="left:375px;width:200px;top:597px;letter-spacing:.14px;">Tool Number</div>
<div class="fld" style="left:583px;top:596px;width:105px;height:23px;line-height:21px;">2</div>
<div class="t r" style="left:375px;width:200px;top:633px;letter-spacing:-.1px;">Number of Flutes</div>
<div class="fld" style="left:583px;top:632px;width:105px;height:23px;line-height:21px;">1</div>
<div class="t dis" style="left:513px;top:667px;letter-spacing:0.12px;">Calculate holder profile</div>
<div class="abs" style="left:674px;top:670px;width:15px;height:15px;box-sizing:border-box;background:#f8f8f8;border:1px solid #c4c4c4;border-radius:3px;"></div>

<div class="btn" style="left:263px;top:749px;width:76px;">Calculate</div>
<div class="btn" style="left:348px;top:749px;width:58px;">Queue</div>
<div class="btn" style="left:415px;top:749px;width:58px;">OK</div>
<div class="btn" style="left:482px;top:749px;width:58px;background:#fdfdfd;border-color:#b4b4b4;color:#000;">Close</div>
<svg width="0" height="0" style="position:absolute"><defs>
<linearGradient id="gd" x1="0" y1="0" x2="1" y2="0"><stop offset="0" stop-color="#c79600"/><stop offset=".45" stop-color="#ffe88a"/><stop offset="1" stop-color="#d9a514"/></linearGradient>
<linearGradient id="gd2" x1="0" y1="0" x2="1" y2="0"><stop offset="0" stop-color="#e0b000"/><stop offset=".4" stop-color="#fff6c8"/><stop offset=".6" stop-color="#fff2b0"/><stop offset="1" stop-color="#e2b21c"/></linearGradient>
<linearGradient id="gy" x1="0" y1="0" x2="1" y2="0"><stop offset="0" stop-color="#8a8a8a"/><stop offset=".45" stop-color="#f2f2f2"/><stop offset="1" stop-color="#909090"/></linearGradient>
<linearGradient id="gw" x1="0" y1="0" x2="1" y2="0"><stop offset="0" stop-color="#d0d0d0"/><stop offset=".45" stop-color="#ffffff"/><stop offset="1" stop-color="#c4c4c4"/></linearGradient>
<linearGradient id="gc" x1="0" y1="0" x2="0" y2="1"><stop offset="0" stop-color="#a8e6f4"/><stop offset="1" stop-color="#1fa8cc"/></linearGradient>
<linearGradient id="gc2" x1="0" y1="0" x2="1" y2="0"><stop offset="0" stop-color="#2a9ab8"/><stop offset=".5" stop-color="#c8f0fa"/><stop offset="1" stop-color="#2a9ab8"/></linearGradient>
<radialGradient id="gball" cx=".35" cy=".35" r=".7"><stop offset="0" stop-color="#d8f2f8"/><stop offset="1" stop-color="#3a9ab4"/></radialGradient>
<linearGradient id="gtl" x1="0" y1="0" x2="0" y2="1"><stop offset="0" stop-color="#bfe6ee"/><stop offset="1" stop-color="#3f97ad"/></linearGradient>
</defs></svg>

<div class="dot-v" style="left:24px;top:101px;height:441px;"></div>
<div class="dot-v" style="left:43px;top:221px;height:101px;"></div>
<div class="dot-h" style="left:26px;top:101px;width:9px;"></div>
<svg class="ico" style="left:35px;top:92.0px" width="16" height="16" viewBox="0 0 16 16"><path d="M2.3 3 V10.2 L8 14.8 L13.7 10.2 V3 Z" fill="url(#gw)" stroke="#a2a2a2" stroke-width=".7"/><path d="M2.6 10.4 Q8 12 13.4 10.4" fill="none" stroke="#b8b8b8" stroke-width=".6"/><ellipse cx="8" cy="3" rx="5.7" ry="2.4" fill="url(#gc2)" stroke="#3f8ea6" stroke-width=".8"/></svg>
<div class="t" style="left:56px;top:89px;">Holes</div>
<div class="dot-h" style="left:26px;top:123px;width:9px;"></div>
<svg class="ico" style="left:35px;top:114.0px" width="16" height="16" viewBox="0 0 16 16"><g stroke="#2b86a0" stroke-width="1.5" fill="none"><path d="M3.5 13 V2.5 M3.5 13 L11.5 4.5 M3.5 13 L14 13.3"/></g><g fill="#2b86a0"><path d="M3.5 0.3 L6 4 H1 Z"/><path d="M13.6 2.6 L12.9 7 L9.3 3.6 Z"/><path d="M16 13.4 L12.4 15.6 L12.5 11 Z"/></g><circle cx="3.3" cy="13" r="2.8" fill="url(#gball)"/></svg>
<div class="t" style="left:56px;top:111px;">Workplane</div>
<div class="dot-h" style="left:26px;top:145px;width:9px;"></div>
<svg class="ico" style="left:35px;top:136.0px" width="16" height="16" viewBox="0 0 16 16"><path d="M0.8 4.6 L10.2 3 L15.2 5.2 V12 L5.2 15.2 L0.8 11.6 Z" fill="#19aecf" stroke="#0b6f88" stroke-width=".9" stroke-linejoin="round"/><path d="M0.8 4.6 L5.4 7.2 L15.2 5.2 M5.4 7.2 L5.2 15.2" fill="none" stroke="#0b6f88" stroke-width=".9"/><path d="M0.8 4.6 L10.2 3 L15.2 5.2 L5.4 7.2 Z" fill="#2fc6e4"/><path d="M6.5 11 L14 9" stroke="#0d86a4" stroke-width=".7"/><circle cx="13.5" cy="5.6" r=".8" fill="#b8f2ff"/></svg>
<div class="t" style="left:56px;top:133px;">Block</div>
<div class="dot-h" style="left:26px;top:167px;width:9px;"></div>
<svg class="ico" style="left:35px;top:158.0px" width="16" height="16" viewBox="0 0 16 16"><path d="M2.2 0.6 H13.8 V10 L8 15 L2.2 10 Z" fill="url(#gd2)" stroke="#c9a227" stroke-width=".5"/><path d="M2.4 10 L8 14.8 L13.6 10 Q8 11.6 2.4 10 Z" fill="#fff6d0" opacity=".8"/></svg>
<div class="abs" style="left:54px;top:155px;width:34px;height:22px;box-sizing:border-box;background:#0078d7;border:1px dotted #e8a050;"></div>
<div class="t" style="left:56px;top:155px;color:#fff;letter-spacing:0.50px;">Tool</div>
<div class="dot-h" style="left:26px;top:189px;width:9px;"></div>
<svg class="ico" style="left:35px;top:180.0px" width="16" height="16" viewBox="0 0 16 16"><rect x="1" y="0.8" width="10.5" height="3" fill="url(#gtl)" stroke="#1e2a30" stroke-width=".9"/><rect x="2.2" y="3.8" width="3.2" height="7.4" fill="url(#gy)" stroke="#1e2a30" stroke-width=".9"/><rect x="1" y="11.2" width="13" height="3.2" fill="url(#gtl)" stroke="#1e2a30" stroke-width=".9"/><rect x="7.6" y="3.8" width="2.6" height="3" fill="#c8c8c8" stroke="#1e2a30" stroke-width=".7"/><path d="M8.2 7 L8.9 8.6 L9.6 7 Z" fill="#f2c200"/><path d="M7 10 H13.6" stroke="#111" stroke-width="1.1"/></svg>
<div class="t" style="left:56px;top:177px;letter-spacing:0.10px;">Machine tool</div>
<div class="dot-h" style="left:32px;top:211px;width:3px;"></div>
<svg class="ico" style="left:19px;top:206px" width="11" height="11" viewBox="0 0 11 11" shape-rendering="crispEdges"><defs><linearGradient id="ex5" x1="0" y1="0" x2="1" y2="1"><stop offset="0" stop-color="#fff"/><stop offset="1" stop-color="#dedede"/></linearGradient></defs><rect x=".5" y=".5" width="10" height="10" rx="1" fill="url(#ex5)" stroke="#919191" stroke-width="1"/><path d="M2.5 5.5 H8.5" stroke="#2a4fb8" stroke-width="1"/></svg>
<svg class="ico" style="left:35px;top:202.0px" width="16" height="16" viewBox="0 0 16 16"><rect x="0" y="6" width="16" height="10.2" fill="url(#gc)"/><path d="M5 0 H11.6 L12.6 10 L8 13.6 L3.6 10.4 Z" fill="url(#gy)" stroke="#4a4a4a" stroke-width=".5"/><path d="M8.6 0 L6 9.6 L8 13 M11 1 L8.8 8" stroke="#555" stroke-width=".8" fill="none"/><path d="M3.8 10.4 L8 13.6 L12.4 10.2 L8 11.4 Z" fill="#3a3a3a"/></svg>
<div class="t" style="left:56px;top:199px;letter-spacing:0.27px;">Drilling</div>
<div class="dot-h" style="left:44px;top:233px;width:10px;"></div>
<svg class="ico" style="left:54px;top:224.0px" width="16" height="16" viewBox="0 0 16 16"><path d="M0 4.2 H8.5 M0 9.6 H9 M0 15.2 H11.8" stroke="#ff2a00" stroke-width="1.5"/><path d="M0 3.4 H8 M0 8.8 H8.6 M0 14.4 H11.8" stroke="#ff9a30" stroke-width=".5"/><path d="M7.4 0.4 H16 V3 L14.6 4.6 H8.8 L7.4 3 Z" fill="url(#gy)" stroke="#7c7c7c" stroke-width=".4"/><path d="M9.2 4.6 H14.6 V11.6 Q13.6 13.6 11.6 13.4 Q9.6 13 9.2 11 Z" fill="url(#gd)" stroke="#b88a10" stroke-width=".4"/><path d="M12.6 5.4 L11.2 11.6" stroke="#fff4b8" stroke-width=".9"/></svg>
<div class="t" style="left:75px;top:221px;letter-spacing:-0.18px;">Retraction</div>
<div class="dot-h" style="left:44px;top:255px;width:10px;"></div>
<svg class="ico" style="left:54px;top:246.0px" width="16" height="16" viewBox="0 0 16 16"><path d="M0.2 15 H3.4 V8.6 H8.2 V15 H12.8 V8.6 H16" fill="none" stroke="#2a8aa2" stroke-width="1.7" stroke-linejoin="miter"/><path d="M5.4 4.4 H13.2" stroke="#2e8f2e" stroke-width="1.2"/><path d="M2.2 4.3 L6.4 1.8 L6.4 6.8 Z" fill="#38b238"/></svg>
<div class="t" style="left:75px;top:243px;letter-spacing:-0.11px;">Feed rate reduction</div>
<div class="dot-h" style="left:44px;top:277px;width:10px;"></div>
<svg class="ico" style="left:54px;top:268.0px" width="16" height="16" viewBox="0 0 16 16"><path d="M3.2 2 L3.6 9.6 M7.6 5 L7.9 12.6 M11.8 8 L12 15.4" stroke="#22dc22" stroke-width="1.7" stroke-linecap="butt"/></svg>
<div class="t" style="left:75px;top:265px;letter-spacing:-0.60px;">Pecking</div>
<div class="dot-h" style="left:44px;top:299px;width:10px;"></div>
<svg class="ico" style="left:54px;top:290.0px" width="16" height="16" viewBox="0 0 16 16"><path d="M4 1.2 H15.8 L9.8 7.6 Z" fill="#7fd8ee" stroke="#111" stroke-width="1" stroke-linejoin="round"/><path d="M0.4 15.4 H11.6 L6 9.2 Z" fill="#7fd8ee" stroke="#111" stroke-width="1" stroke-linejoin="round"/></svg>
<div class="t" style="left:75px;top:287px;letter-spacing:-0.30px;">Order</div>
<div class="dot-h" style="left:44px;top:321px;width:10px;"></div>
<svg class="ico" style="left:54px;top:312.0px" width="16" height="16" viewBox="0 0 16 16"><path d="M1 0.8 H8.2 V2.6 L7 3.6 H2.4 L1 2.6 Z" fill="#e8e8e8" stroke="#111" stroke-width=".9"/><rect x="2.6" y="3.6" width="4.6" height="8.8" fill="#f0c020" stroke="#111" stroke-width=".8"/><path d="M6.6 3.8 V13" stroke="#ff3a10" stroke-width="1.3"/><path d="M3.6 6 h2 M3.6 8.4 h2 M3.6 10.6 h2" stroke="#ff8a20" stroke-width=".9"/><path d="M7.8 5.2 H14.4 V13 Q11.2 14.6 7.8 13 Z" fill="url(#gy)" stroke="#111" stroke-width="1"/><rect x="8.4" y="5.4" width="5.4" height="1.6" fill="#7fd8ee"/><path d="M9 8 V12.6 H13.4 V8 Z" fill="#6a6a6a"/></svg>
<div class="t" style="left:75px;top:309px;letter-spacing:0.16px;">Automatic verification</div>
<div class="dot-h" style="left:26px;top:343px;width:9px;"></div>
<svg class="ico" style="left:35px;top:334.0px" width="16" height="16" viewBox="0 0 16 16"><g stroke="#2b86a0" stroke-width="1.5" fill="none"><path d="M3.5 13 V2.5 M3.5 13 L14 13.3"/></g><g fill="#2b86a0"><path d="M3.5 0.3 L6 4 H1 Z"/><path d="M16 13.4 L12.4 15.6 L12.5 11 Z"/></g><path d="M5.4 9.4 L10.8 3.6 L13.2 5.8 L7.6 11.8 Z" fill="url(#gd)" stroke="#b08408" stroke-width=".4"/><path d="M10.8 3.6 L12 0.6 H15.6 V4.4 L13.2 5.8 Z" fill="#d4d4d4" stroke="#8a8a8a" stroke-width=".5"/><path d="M7.4 9 L10.6 5.6" stroke="#fff2a8" stroke-width=".9"/><circle cx="3.3" cy="13" r="2.8" fill="url(#gball)"/></svg>
<div class="t" style="left:56px;top:331px;">Tool axis</div>
<div class="dot-h" style="left:26px;top:365px;width:9px;"></div>
<svg class="ico" style="left:35px;top:356.0px" width="16" height="16" viewBox="0 0 16 16"><circle cx="8" cy="8" r="6.7" fill="#ffe45a" stroke="#111" stroke-width="1"/><circle cx="8" cy="8" r="5.4" fill="none" stroke="#fff3a8" stroke-width=".8"/><path d="M12 3.6 L9 9 L7 7 Z" fill="#e0241c"/><path d="M4 12.4 L9 9 L7 7 Z" fill="#1f6fe0"/></svg>
<div class="t" style="left:56px;top:353px;letter-spacing:-0.08px;">Machine axis control</div>
<div class="dot-h" style="left:32px;top:387px;width:3px;"></div>
<svg class="ico" style="left:19px;top:382px" width="11" height="11" viewBox="0 0 11 11" shape-rendering="crispEdges"><defs><linearGradient id="ex13" x1="0" y1="0" x2="1" y2="1"><stop offset="0" stop-color="#fff"/><stop offset="1" stop-color="#dedede"/></linearGradient></defs><rect x=".5" y=".5" width="10" height="10" rx="1" fill="url(#ex13)" stroke="#919191" stroke-width="1"/><path d="M2.5 5.5 H8.5" stroke="#2a4fb8" stroke-width="1"/><path d="M5.5 2.5 V8.5" stroke="#2a4fb8" stroke-width="1"/></svg>
<svg class="ico" style="left:35px;top:378.0px" width="16" height="16" viewBox="0 0 16 16"><path d="M0 4.2 H8.5 M0 9.6 H9 M0 15.2 H11.8" stroke="#ff2a00" stroke-width="1.5"/><path d="M0 3.4 H8 M0 8.8 H8.6 M0 14.4 H11.8" stroke="#ff9a30" stroke-width=".5"/><path d="M7.4 0.4 H16 V3 L14.6 4.6 H8.8 L7.4 3 Z" fill="url(#gy)" stroke="#7c7c7c" stroke-width=".4"/><path d="M9.2 4.6 H14.6 V11.6 Q13.6 13.6 11.6 13.4 Q9.6 13 9.2 11 Z" fill="url(#gd)" stroke="#b88a10" stroke-width=".4"/><path d="M12.6 5.4 L11.2 11.6" stroke="#fff4b8" stroke-width=".9"/></svg>
<div class="t" style="left:56px;top:375px;letter-spacing:-0.15px;">Rapid Moves</div>
<div class="dot-h" style="left:32px;top:409px;width:3px;"></div>
<svg class="ico" style="left:19px;top:404px" width="11" height="11" viewBox="0 0 11 11" shape-rendering="crispEdges"><defs><linearGradient id="ex14" x1="0" y1="0" x2="1" y2="1"><stop offset="0" stop-color="#fff"/><stop offset="1" stop-color="#dedede"/></linearGradient></defs><rect x=".5" y=".5" width="10" height="10" rx="1" fill="url(#ex14)" stroke="#919191" stroke-width="1"/><path d="M2.5 5.5 H8.5" stroke="#2a4fb8" stroke-width="1"/><path d="M5.5 2.5 V8.5" stroke="#2a4fb8" stroke-width="1"/></svg>
<svg class="ico" style="left:35px;top:400.0px" width="16" height="16" viewBox="0 0 16 16"><path d="M4.4 0.4 H12.6 L11.4 2.6 H5.6 Z" fill="url(#gy)" stroke="#7a7a7a" stroke-width=".4"/><path d="M5.8 2.6 H11.2 V10.4 L8.5 12.6 L5.8 10.4 Z" fill="url(#gd)" stroke="#b08408" stroke-width=".4"/><path d="M9.4 3.4 L8 10.4" stroke="#fff0a0" stroke-width=".9"/><path d="M1 2 V10.5 M15.2 2 V10.5" stroke="#22d8ee" stroke-width="1.5"/><path d="M1 0 V2 M15.2 0 V2" stroke="#f01010" stroke-width="1.5"/><path d="M1 10.5 Q1.2 14.6 5 14.2 M15.2 10.5 Q15 14.6 11.4 14.2" stroke="#f2e000" stroke-width="1.5" fill="none"/><path d="M5 14.2 Q7.6 13.6 8.2 11.6 Q8.8 13.6 11.4 14.2" stroke="#1fd21f" stroke-width="1.5" fill="none"/></svg>
<div class="t" style="left:56px;top:397px;letter-spacing:-0.31px;">Leads and links</div>
<div class="dot-h" style="left:26px;top:431px;width:9px;"></div>
<svg class="ico" style="left:35px;top:422.0px" width="16" height="16" viewBox="0 0 16 16"><circle cx="4.8" cy="10.6" r="4.6" fill="#fff" stroke="#111" stroke-width=".8"/><path d="M4.8 10.6 V6 A4.6 4.6 0 0 0 0.2 10.6 Z M4.8 10.6 V15.2 A4.6 4.6 0 0 0 9.4 10.6 Z" fill="#111"/><path d="M7.4 0.4 H16 V3 L14.6 4.6 H9.4 L7.4 3 Z" fill="url(#gy)" stroke="#7c7c7c" stroke-width=".4"/><path d="M10 4.6 H14.8 V11.4 Q13.8 13.2 12.2 13 Q10.4 12.6 10 10.8 Z" fill="url(#gd)" stroke="#b88a10" stroke-width=".4"/><path d="M13 5.4 L11.8 11.4" stroke="#fff4b8" stroke-width=".9"/></svg>
<div class="t" style="left:56px;top:419px;letter-spacing:0.15px;">Start point</div>
<div class="dot-h" style="left:26px;top:453px;width:9px;"></div>
<svg class="ico" style="left:35px;top:444.0px" width="16" height="16" viewBox="0 0 16 16"><circle cx="4.8" cy="10.6" r="4.6" fill="#fff" stroke="#111" stroke-width=".8"/><path d="M4.8 10.6 V6 A4.6 4.6 0 0 0 0.2 10.6 Z M4.8 10.6 V15.2 A4.6 4.6 0 0 0 9.4 10.6 Z" fill="#111"/><path d="M7.4 0.4 H16 V3 L14.6 4.6 H9.4 L7.4 3 Z" fill="url(#gy)" stroke="#7c7c7c" stroke-width=".4"/><path d="M10 4.6 H14.8 V11.4 Q13.8 13.2 12.2 13 Q10.4 12.6 10 10.8 Z" fill="url(#gd)" stroke="#b88a10" stroke-width=".4"/><path d="M13 5.4 L11.8 11.4" stroke="#fff4b8" stroke-width=".9"/></svg>
<div class="t" style="left:56px;top:441px;letter-spacing:0.05px;">End point</div>
<div class="dot-h" style="left:32px;top:475px;width:3px;"></div>
<svg class="ico" style="left:19px;top:470px" width="11" height="11" viewBox="0 0 11 11" shape-rendering="crispEdges"><defs><linearGradient id="ex17" x1="0" y1="0" x2="1" y2="1"><stop offset="0" stop-color="#fff"/><stop offset="1" stop-color="#dedede"/></linearGradient></defs><rect x=".5" y=".5" width="10" height="10" rx="1" fill="url(#ex17)" stroke="#919191" stroke-width="1"/><path d="M2.5 5.5 H8.5" stroke="#2a4fb8" stroke-width="1"/><path d="M5.5 2.5 V8.5" stroke="#2a4fb8" stroke-width="1"/></svg>
<svg class="ico" style="left:35px;top:466.0px" width="16" height="16" viewBox="0 0 16 16"><path d="M0.2 15 H3.4 V8.6 H8.2 V15 H12.8 V8.6 H16" fill="none" stroke="#2a8aa2" stroke-width="1.7" stroke-linejoin="miter"/><path d="M5.4 4.4 H13.2" stroke="#2e8f2e" stroke-width="1.2"/><path d="M2.2 4.3 L6.4 1.8 L6.4 6.8 Z" fill="#38b238"/></svg>
<div class="t" style="left:56px;top:463px;letter-spacing:-0.42px;">Feeds and speeds</div>
<div class="dot-h" style="left:26px;top:497px;width:9px;"></div>
<svg class="ico" style="left:35px;top:488.0px" width="16" height="16" viewBox="0 0 16 16"><path d="M3 1.2 H13.2 Q14.4 1.6 13.6 3 L11 12.4 Q12.4 13 11.6 14.2 H1.2 Q0.4 13.4 1.8 12.4 L4 3.2 Q2.4 2.4 3 1.2 Z" fill="#f4ec50" stroke="#3a3a20" stroke-width=".9" stroke-linejoin="round"/><path d="M5.6 4.6 H11 M5 7.4 H10.2 M4.4 10.2 H9.6" stroke="#6a6a2a" stroke-width=".9"/><path d="M2 12.6 H10.8" stroke="#8a8430" stroke-width=".8"/></svg>
<div class="t" style="left:56px;top:485px;">History</div>
<div class="dot-h" style="left:26px;top:519px;width:9px;"></div>
<svg class="ico" style="left:35px;top:510.0px" width="16" height="16" viewBox="0 0 16 16"><path d="M3 1.4 L12.6 0.8 V13.6 L3 14.4 Z" fill="#fafafa" stroke="#b4b4c8" stroke-width=".7"/><path d="M3 1.4 L12.6 0.8" stroke="#e0b040" stroke-width="1"/><path d="M3.2 1.4 V14.4" stroke="#8a9ae0" stroke-width=".8"/><path d="M5 4 h3 M5 6.4 h5.6 M5 8 h5.6 M5 9.6 h4.6 M5 12 h2.6" stroke="#b0b0b0" stroke-width=".8"/></svg>
<div class="t" style="left:56px;top:507px;">Notes and Description</div>
<div class="dot-h" style="left:26px;top:541px;width:9px;"></div>
<svg class="ico" style="left:35px;top:532.0px" width="16" height="16" viewBox="0 0 16 16"><circle cx="6.6" cy="4" r="3.1" fill="#e8c8a4" stroke="#8a6a4a" stroke-width=".3"/><path d="M3.4 3.6 Q4 0.2 7.4 0.6 Q10 1 9.8 3.6 Q8 2 3.4 3.6 Z" fill="#4a3a2c"/><path d="M2 15 Q1.6 8.6 6.4 7.8 Q9 8 10 9.6 L8 15.4 Z" fill="#1f6aa8"/><g transform="translate(10.2,11.2)"><path d="M0 -4.8 L1.2 -4.6 L1.6 -3.2 L3 -3.8 L4 -2.8 L3.2 -1.6 L4.6 -1.2 L4.8 0.2 L3.4 0.8 L4 2.2 L3 3.4 L1.8 2.8 L1.2 4.2 L-0.4 4.6 L-1 3.2 L-2.4 3.8 L-3.6 2.8 L-2.8 1.6 L-4.2 1 L-4.4 -0.6 L-3 -1 L-3.6 -2.4 L-2.6 -3.6 L-1.4 -3 Z" fill="#f8f8f8" stroke="#c0c0c0" stroke-width=".4"/><circle r="1.7" fill="#1f6fd0"/></g></svg>
<div class="t" style="left:56px;top:529px;letter-spacing:-0.10px;">User defined settings</div>
<!-- ===== tool geometry diagram ===== -->
<svg class="abs" style="left:390px;top:220px" width="140" height="190" viewBox="390 220 140 190">
<g stroke="#7f7f7f" stroke-width="1" fill="none" shape-rendering="crispEdges">
<path d="M398 238.5 H516"/>
<path d="M404.5 239 V366"/>
<path d="M398 366.5 H453"/>
<path d="M507.5 239 V351"/>
<path d="M483 351.5 H516"/>
<path d="M429.5 353 V400 M482.5 353 V400"/>
<path d="M430 397.5 H482"/>
</g>
<g fill="#7f7f7f">
<path d="M404.5 239 L407.7 249 H401.3 Z"/><path d="M404.5 366 L407.7 356 H401.3 Z"/>
<path d="M507.5 239 L510.7 249 H504.3 Z"/><path d="M507.5 351 L510.7 341 H504.3 Z"/>
<path d="M430 397.5 L440 394.3 V400.7 Z"/><path d="M482 397.5 L472 394.3 V400.7 Z"/>
</g>
<path d="M429.5 239 H482.5 V351 L456 366 L429.5 351 Z" fill="#ffff80" stroke="#000" stroke-width="1.5" stroke-linejoin="miter"/>
<path d="M456.5 226 V379" stroke="#7f7f7f" stroke-width="1" stroke-dasharray="14 3 5 3" stroke-dashoffset="-1" fill="none" shape-rendering="crispEdges"/>
<path d="M456.5 345.5 Q465 346 470 352" stroke="#7f7f7f" stroke-width="1" fill="none"/>
<path d="M472.5 356 L464.5 352.5 L470 347.5 Z" fill="#7f7f7f"/>
</svg>
<!-- ===== tool pictures (bottom-left of dialog) ===== -->
<svg class="abs" style="left:60px;top:620px" width="150" height="160" viewBox="60 620 150 160">
<defs>
<linearGradient id="tm" x1="0" y1="0" x2="1" y2="0"><stop offset="0" stop-color="#b2aeaa"/><stop offset=".3" stop-color="#d6d3d0"/><stop offset=".65" stop-color="#c2bfbb"/><stop offset="1" stop-color="#9e9a96"/></linearGradient>
<linearGradient id="tf" x1="0" y1="0" x2="1" y2="0"><stop offset="0" stop-color="#9f9c98"/><stop offset=".35" stop-color="#cbc8c5"/><stop offset=".7" stop-color="#aeaba7"/><stop offset="1" stop-color="#8a8783"/></linearGradient>
<radialGradient id="tb" cx=".35" cy=".3" r=".8"><stop offset="0" stop-color="#e6e4e2"/><stop offset=".45" stop-color="#aeaba7"/><stop offset="1" stop-color="#55524f"/></radialGradient>
<filter id="blur" x="-100%" y="-200%" width="300%" height="500%"><feGaussianBlur stdDeviation="4"/></filter>
</defs>
<ellipse cx="89" cy="756" rx="13" ry="6" fill="#000" opacity=".55" filter="url(#blur)"/>
<ellipse cx="137" cy="734" rx="12" ry="5" fill="#000" opacity=".5" filter="url(#blur)"/>
<ellipse cx="179" cy="706" rx="11" ry="5" fill="#000" opacity=".5" filter="url(#blur)"/>
<!-- tool 1 -->
<path d="M79.6 700 V750.5 Q87.6 755.5 95.6 750.5 V700 Z" fill="url(#tf)"/>
<path d="M86 705 L81 733 M94 707 L86 748 M88 722 L82 750" stroke="#7d7a77" stroke-width="1.2" fill="none"/>
<path d="M78.2 658.5 V701.5 Q87.7 705.5 97.2 701.5 V658.5 Z" fill="url(#tm)"/>
<ellipse cx="87.7" cy="658.5" rx="9.5" ry="2.8" fill="#d9d6d3"/>
<!-- tool 2 -->
<rect x="132" y="686" width="6.4" height="32" fill="url(#tf)"/>
<circle cx="135" cy="724.7" r="8.8" fill="url(#tb)"/>
<path d="M132.4 719.5 L136.4 723.5 L138.6 718.6 L140 724 L137.4 732.6" stroke="#efeeec" stroke-width="1.1" fill="none"/>
<path d="M138.4 724 L137 733" stroke="#55524f" stroke-width="1" fill="none"/>
<path d="M126.1 643.8 V686 Q135.1 690 144.1 686 V643.8 Z" fill="url(#tm)"/>
<path d="M129.4 646.5 V684" stroke="#9a9793" stroke-width="1"/>
<ellipse cx="135.1" cy="643.8" rx="9" ry="2.7" fill="#d9d6d3"/>
<!-- tool 3 -->
<path d="M171 662 V700.5 Q177.1 706 183.3 700.5 V662 Z" fill="url(#tf)"/>
<path d="M176 667 L172.5 690 M182.6 668 L176.4 700 M178 684 L174 701" stroke="#7d7a77" stroke-width="1.2" fill="none"/>
<path d="M169.2 629.6 V663 Q176.8 666.6 184.3 663 V629.6 Z" fill="url(#tm)"/>
<path d="M172.2 632 V661" stroke="#9a9793" stroke-width="1"/>
<ellipse cx="176.75" cy="629.6" rx="7.55" ry="2.4" fill="#d9d6d3"/>
</svg>
<!-- ===== title icon ===== -->
<svg class="ico" style="left:11px;top:7px" width="19" height="19" viewBox="0 0 18 18">
<defs><linearGradient id="pbg" x1="0" y1="0" x2="1" y2="1"><stop offset="0" stop-color="#f6d9bb"/><stop offset=".6" stop-color="#fae6d2"/><stop offset="1" stop-color="#fdf3e8"/></linearGradient>
<linearGradient id="pfg" x1="0" y1="0" x2="1" y2="1"><stop offset="0" stop-color="#e9a040"/><stop offset="1" stop-color="#b8701c"/></linearGradient></defs>
<rect x="0.5" y="0.5" width="17" height="17" fill="url(#pbg)"/>
<path d="M5.2 15 L5.8 4.6 Q6.2 2.6 8.6 2.4 Q14 2 14.2 6 Q14.2 10 9.4 10.2 L8 10.2 L7.6 15 Z M8.2 5 L8 8 Q11.4 8.2 11.4 6.2 Q11.4 4.6 8.2 5 Z" fill="url(#pfg)" fill-rule="evenodd"/>
</svg>
<!-- ===== top button icons ===== -->
<svg class="ico" style="left:13px;top:47px" width="28" height="28" viewBox="-13.2 -13.4 26.4 26.4">
<defs><linearGradient id="rc" x1="0" y1="0" x2="0" y2="1"><stop offset="0" stop-color="#dff3f8"/><stop offset="1" stop-color="#8fcfe0"/></linearGradient></defs>
<g fill="url(#rc)" stroke="#1a1a1a" stroke-width="1.1" stroke-linejoin="miter">
<path id="rcA" d="M-10.6 -6.1 A12.2 12.2 0 0 1 2.5 -11.9 L3.2 -14.9 L6.8 -6.5 L0.7 -3.5 L1.4 -6.5 A6.6 6.6 0 0 0 -5.7 -3.3 Z" transform="rotate(8)"/>
<path d="M-10.6 -6.1 A12.2 12.2 0 0 1 2.5 -11.9 L3.2 -14.9 L6.8 -6.5 L0.7 -3.5 L1.4 -6.5 A6.6 6.6 0 0 0 -5.7 -3.3 Z" transform="rotate(128)"/>
<path d="M-10.6 -6.1 A12.2 12.2 0 0 1 2.5 -11.9 L3.2 -14.9 L6.8 -6.5 L0.7 -3.5 L1.4 -6.5 A6.6 6.6 0 0 0 -5.7 -3.3 Z" transform="rotate(248)"/>
</g>
</svg>
<svg class="ico" style="left:50px;top:47px" width="28" height="28" viewBox="50 47 28 28">
<defs><linearGradient id="cd" x1="0" y1="0" x2="1" y2="1"><stop offset="0" stop-color="#f4f0cc"/><stop offset="1" stop-color="#d6d09a"/></linearGradient></defs>
<rect x="51.6" y="48.8" width="13.6" height="22.4" fill="url(#cd)" stroke="#1e1e1e" stroke-width="1.2"/>
<path d="M56 51 Q53 53 57 56 Q61 59 57 62 Q53.6 65 57 69" stroke="#e8141c" stroke-width="2.6" fill="none" stroke-linecap="round"/>
<path d="M59.6 51 Q62 54 58 57 Q54.4 60 58.6 64 Q61 66.6 59 69.6" stroke="#1a5cf0" stroke-width="2.4" fill="none" stroke-linecap="round"/>
<rect x="62.4" y="51.2" width="13.4" height="23" fill="url(#cd)" stroke="#1e1e1e" stroke-width="1.2"/>
<path d="M71 53.6 Q74 56 70 59.4 Q66 62.6 70 66 Q72.6 68.6 71 72" stroke="#1a5cf0" stroke-width="2.4" fill="none" stroke-linecap="round"/>
<path d="M67.6 53.6 Q64.6 56 68.4 59 Q72.6 62 68.6 65.4 Q65.4 68.6 68.8 71.8" stroke="#e8141c" stroke-width="2.6" fill="none" stroke-linecap="round"/>
<path d="M69.4 66 Q72 68 71 71.6" stroke="#18b0e8" stroke-width="2" fill="none" stroke-linecap="round"/>
</svg>
<!-- ===== tool row icons ===== -->
<svg class="ico" style="left:336px;top:138px" width="24" height="24" viewBox="336 138 24 24">
<defs><linearGradient id="dt" x1="0" y1="0" x2="1" y2="0"><stop offset="0" stop-color="#c8c8c8"/><stop offset=".5" stop-color="#fbfbfb"/><stop offset="1" stop-color="#c2c2c2"/></linearGradient></defs>
<path d="M339.2 140.4 H356.8 V151.6 L348 159.6 L339.2 151.6 Z" fill="url(#dt)" stroke="#b4b4b4" stroke-width=".9"/>
<path d="M339.4 151.6 H356.6" stroke="#bdbdbd" stroke-width=".8"/>
<g stroke="#b2b2b2" stroke-width=".9"><path d="M342.4 140.4 V148.6 M338.4 144.4 H346.6 M339.8 141.6 L345.2 147.2 M345.2 141.6 L339.8 147.2"/></g>
</svg>
<svg class="ico" style="left:404px;top:136px" width="24" height="24" viewBox="404 136 24 24">
<rect x="404.4" y="136.4" width="21.2" height="21.2" fill="#fafafa" opacity=".9"/>
<g fill="#dcdcdc" stroke="#a2a2a2" stroke-width="1.1">
<rect x="405.6" y="137.6" width="6.2" height="18.8"/><rect x="411.8" y="139.6" width="6.6" height="16.8" fill="#c6c6c6"/><rect x="418.4" y="137.6" width="6.2" height="18.8"/>
<path d="M406.6 143 L411.4 138.2 L421.6 149.4 L417.4 153.2 Z" fill="#e4e4e4"/>
<path d="M409.4 146 L413.6 141.4"/>
</g>
<path d="M407 153.4 h3 M413.4 153.4 h3 M420 153.4 h3" stroke="#bcbcbc" stroke-width=".9"/>
</svg>
<svg class="ico" style="left:658px;top:136px" width="24" height="24" viewBox="658 136 24 24">
<defs><linearGradient id="pn" x1="0" y1="0" x2="1" y2="1"><stop offset="0" stop-color="#9fe4f8"/><stop offset="1" stop-color="#2fb4de"/></linearGradient></defs>
<path d="M672.2 137 L679 142.8 L670.4 152 L664 145.4 Z" fill="url(#pn)" stroke="#1590b8" stroke-width=".7" stroke-linejoin="round"/>
<path d="M664 145.4 L670.4 152 L666.4 153.4 L662 152 Z" fill="#e8e8e8"/>
<path d="M666.4 153.4 L670.4 152 L668 150 Z" fill="#9a9a9a"/>
<path d="M664 145.4 L660 155.6 L666.4 153.4 L662.6 151 Z" fill="#fff" stroke="#c0c0c0" stroke-width=".3"/>
<path d="M660 155.6 L661.8 150.8 L665.6 153.6 Z" fill="#111"/>
</svg>
<!-- ===== main toolbar icons ===== -->
<svg class="abs" style="left:764px;top:2px" width="360" height="28" viewBox="764 2 360 28">
<defs>
<linearGradient id="tl1" x1="0" y1="0" x2="1" y2="1"><stop offset="0" stop-color="#c6eaf2"/><stop offset="1" stop-color="#2f92ac"/></linearGradient>
<linearGradient id="tl2" x1="0" y1="0" x2="1" y2="0"><stop offset="0" stop-color="#c8c8c8"/><stop offset=".5" stop-color="#ffffff"/><stop offset="1" stop-color="#b0b0b0"/></linearGradient>
<linearGradient id="dm" x1="0" y1="0" x2="0" y2="1"><stop offset="0" stop-color="#e4f7fc"/><stop offset="1" stop-color="#5ccdec"/></linearGradient>
<linearGradient id="gcir" x1="0" y1="0" x2="1" y2="1"><stop offset="0" stop-color="#f6f6f6"/><stop offset="1" stop-color="#bdbdbd"/></linearGradient>
<linearGradient id="gcir2" x1="0" y1="0" x2="1" y2="1"><stop offset="0" stop-color="#d6d6d6"/><stop offset="1" stop-color="#a8a8a8"/></linearGradient>
<linearGradient id="sv" x1="0" y1="0" x2="0" y2="1"><stop offset="0" stop-color="#a8e8f8"/><stop offset="1" stop-color="#28b8e0"/></linearGradient>

</defs>
<!-- icon 1 -->
<rect x="782" y="8" width="5" height="9" fill="url(#tl2)"/>
<rect x="780.6" y="4.5" width="7" height="3.6" rx="0.6" fill="url(#tl1)" stroke="#000" stroke-width="1"/>
<rect x="771.4" y="4.5" width="9" height="11.2" rx="1" fill="#fff" stroke="#000" stroke-width="1"/>
<path d="M773 6.6 h5.6 M773 8.6 h5.6 M773 10.6 h5.6" stroke="#111" stroke-width=".9"/>
<rect x="773" y="11.6" width="6" height="3.4" fill="url(#tl2)"/>
<path d="M776 16.8 H789.6" stroke="#000" stroke-width="1.4"/>
<g transform="translate(780,9.2)"><path d="M0 7.4 Q0.4 4 2 2.4 L2.8 4.4 L4.4 0.2 L5.6 3.4 L7.4 1.4 L7.2 4 L11 0.4 Q9 4.4 8.6 7.4 Z" fill="#ff6410"/><path d="M1.8 7.4 Q2 5 3 4.4 L3.8 5.8 L4.6 3 L5.6 5.4 L6.8 4 Q6.8 6 7.4 7.4 Z" fill="#ffe21c"/></g>
<rect x="773.6" y="18" width="16.6" height="4.4" rx="1" fill="url(#tl1)" stroke="#000" stroke-width="1"/>
<!-- icon 2 -->
<rect x="799" y="8" width="4.2" height="9.6" fill="url(#tl2)"/>
<path d="M798.6 8 V17.6" stroke="#000" stroke-width="1"/>
<rect x="803.2" y="8" width="1.6" height="9.6" fill="#111"/>
<rect x="797.8" y="4.5" width="14" height="3.6" rx="0.8" fill="url(#tl1)" stroke="#000" stroke-width="1"/>
<path d="M804 16.8 H813.6" stroke="#000" stroke-width="1.4"/>
<g transform="translate(803.4,9.2)"><path d="M0 7.4 Q0.4 4 2 2.4 L2.8 4.4 L4.4 0.2 L5.6 3.4 L7.4 1.4 L7.2 4 L11 0.4 Q9 4.4 8.6 7.4 Z" fill="#ff6410"/><path d="M1.8 7.4 Q2 5 3 4.4 L3.8 5.8 L4.6 3 L5.6 5.4 L6.8 4 Q6.8 6 7.4 7.4 Z" fill="#ffe21c"/></g>
<rect x="797.8" y="18" width="16.6" height="4.4" rx="1" fill="url(#tl1)" stroke="#000" stroke-width="1"/>
<!-- small x -->
<rect x="826" y="7.4" width="14.4" height="13.8" fill="#fdfdfd"/>
<path d="M830.4 12.4 L836.8 18.8 M836.8 12.4 L830.4 18.8" stroke="#5d7187" stroke-width="1.9"/>
<!-- icon 3 : layers -->
<g stroke="#000" stroke-width=".7" fill="#35a6c2">
<path d="M850.4 22.8 L853.4 20.4 H864.6 L861.4 22.8 Z"/><path d="M850.4 20.6 L853.4 18.2 H864.6 L861.4 20.6 Z"/><path d="M850.4 18.4 L853.4 16 H864.6 L861.4 18.4 Z"/><path d="M850.4 16.2 L853.4 13.8 H864.6 L861.4 16.2 Z"/>
</g>
<path d="M855.4 15.4 L860.4 11.4 H869.8 L864.6 15.4 Z" fill="#efe23c" stroke="#b8ac10" stroke-width=".5"/>
<g stroke="#000" stroke-width=".7" fill="#35a6c2">
<path d="M850.4 13.4 L853.4 11 H860.2 L857.2 13.4 Z"/><path d="M850.4 11.2 L853.4 8.8 H864.6 L861.4 11.2 Z"/><path d="M850.4 9 L853.4 6.6 H864.6 L861.4 9 Z"/><path d="M851.6 6.8 L854.4 5 H864.6 L861.8 6.8 Z"/>
</g>
<!-- icon 4 : diamond + cylinder -->
<path d="M886.6 13 V19.6 Q892 23.6 897.4 19.6 V13 Z" fill="url(#tl2)" stroke="#000" stroke-width="1"/>
<path d="M886.6 14 V19.4 Q892 23.2 897.4 19.4 V14 Z" fill="#9fe0f2" opacity=".6"/>
<path d="M882.6 12.2 L892 6.2 L901.4 12.2 L892 19 Z" fill="#7fd6ee" stroke="#000" stroke-width="1"/>
<ellipse cx="892" cy="12.2" rx="5.2" ry="2" fill="#eefafd" stroke="#000" stroke-width=".9"/>
<!-- icon 5 : diamond -->
<path d="M914.6 12.4 L924.6 7 L934 11.6 L922.8 17.6 Z" fill="url(#dm)" stroke="#000" stroke-width="1"/>
<!-- icon 6,7 : disabled circles -->
<circle cx="956" cy="13.8" r="9.6" fill="url(#gcir)" stroke="#bcbcbc" stroke-width=".8"/>
<path d="M950.4 14.6 L954.2 18.6 L961.2 9.6" fill="none" stroke="#fff" stroke-width="2"/>
<circle cx="988" cy="13.8" r="9.6" fill="url(#gcir2)" stroke="#b0b0b0" stroke-width=".8"/>
<path d="M984 9.4 L992 18.2 M992 9.4 L984 18.2" fill="none" stroke="#f4f4f4" stroke-width="2.6"/>
<!-- undo -->
<path d="M1019.2 19.6 Q1026.6 18.6 1025.6 13 Q1024.8 9.4 1019.6 10.6" fill="none" stroke="#c8960a" stroke-width="2.7"/>
<path d="M1013.8 10 L1021.4 7.4 L1021 15.2 Z" fill="#c8960a"/>
<!-- save -->
<rect x="1046" y="5" width="18" height="17" fill="#0c0c0c"/>
<rect x="1050" y="5.6" width="10" height="6.6" fill="url(#sv)"/>
<rect x="1056.6" y="6" width="3" height="5.6" fill="#b8b8b8"/>
<rect x="1049.4" y="13.6" width="11.2" height="8" fill="url(#sv)"/>
<!-- X (cyan) -->
<path d="M1079 7 Q1083 6 1086 13 Q1089 6.4 1094.6 6.6 M1077.6 20.6 Q1083 21.6 1086 13 Q1089 21.4 1095.6 20.6" fill="none" stroke="#1c4a5c" stroke-width="3.8" stroke-linecap="round"/>
<path d="M1079 7 Q1083 6 1086 13 Q1089 6.4 1094.6 6.6 M1077.6 20.6 Q1083 21.6 1086 13 Q1089 21.4 1095.6 20.6" fill="none" stroke="#8fdcf2" stroke-width="2.2" stroke-linecap="round"/>
<!-- small x 2 -->
<rect x="1100.2" y="7.4" width="14.4" height="13.8" fill="#fdfdfd"/>
<path d="M1104.4 12.4 L1110.8 18.8 M1110.8 12.4 L1104.4 18.8" stroke="#5d7187" stroke-width="1.9"/>
</svg>
<!-- second row small x -->
<svg class="abs" style="left:764px;top:41px" width="16" height="16" viewBox="764 41 16 16">
<rect x="764.2" y="42" width="14" height="13" fill="#f8f8f8"/>
<path d="M768 45.6 L774.4 52 M774.4 45.6 L768 52" stroke="#5d7187" stroke-width="1.9"/>
</svg>
</div></div>
</body>
</html>
